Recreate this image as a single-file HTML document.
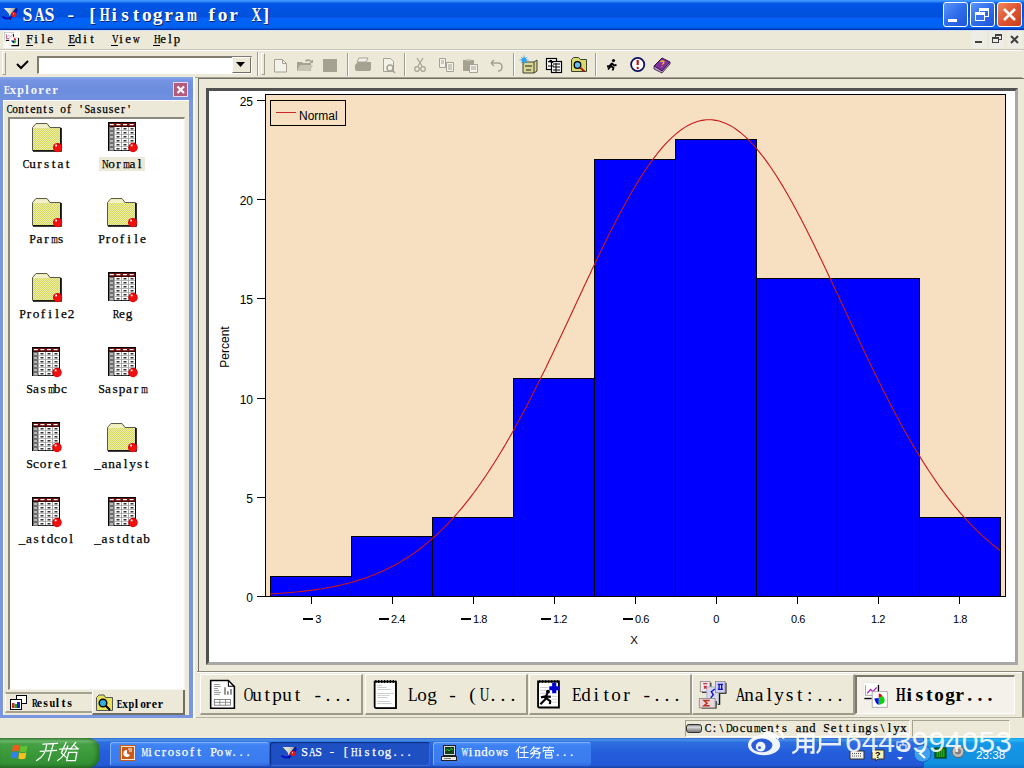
<!DOCTYPE html>
<html><head><meta charset="utf-8">
<style>
*{margin:0;padding:0;box-sizing:border-box}
html,body{width:1024px;height:768px;overflow:hidden;background:#ECE9D8;font-family:"Liberation Mono",monospace}
.a{position:absolute}
.mono{font-family:"Liberation Mono",monospace;white-space:pre}
.sans{font-family:"Liberation Sans",sans-serif;white-space:pre}
.tb{top:2px;width:25px;height:25px;border:1px solid #fff;border-radius:3px}
.mi{top:32px;font-size:12.5px;color:#000;white-space:pre;font-family:"Liberation Mono",monospace;transform:scaleX(0.933);transform-origin:0 0}
.lbl{font-size:11.7px;color:#000;white-space:pre;font-family:"Liberation Mono",monospace;text-align:center;width:80px}
.tab{top:674px;height:41px;width:163px;background:#ECE9D8;border-top:1px solid #fff;border-left:1px solid #fff;border-right:2px solid #9D9A8A;border-bottom:2px solid #9D9A8A}
.tabt{top:685px;font-size:16.6px;white-space:pre;font-family:"Liberation Mono",monospace;color:#000;transform:scaleY(1.16);transform-origin:0 0}
.tkb{top:742px;height:24px;border-radius:3px}
</style></head><body>

<div class="a" style="left:0;top:0;width:1024px;height:30px;background:linear-gradient(#3D95FF 0,#3D95FF 1px,#0A5CE8 3px,#0055E5 4px,#0052DC 17px,#0A5BF5 18px,#0063F8 20px,#0061F0 28px,#0035B0 29px,#0035B0 30px)"></div>
<div class="a" style="left:22px;top:4px;color:#fff;font-family:'Liberation Serif',serif;font-size:19.5px;font-weight:bold;white-space:pre;text-shadow:1px 1px 0 #0a246a"><span style="position:absolute;left:0.00px;width:10.85px;text-align:center;transform:scaleX(0.921)">S</span><span style="position:absolute;left:10.85px;width:10.85px;text-align:center;transform:scaleX(0.709)">A</span><span style="position:absolute;left:21.70px;width:10.85px;text-align:center;transform:scaleX(0.921)">S</span><span style="position:absolute;left:43.40px;width:10.85px;text-align:center">-</span><span style="position:absolute;left:65.10px;width:10.85px;text-align:center">[</span><span style="position:absolute;left:75.95px;width:10.85px;text-align:center;transform:scaleX(0.658)">H</span><span style="position:absolute;left:86.80px;width:10.85px;text-align:center">i</span><span style="position:absolute;left:97.65px;width:10.85px;text-align:center">s</span><span style="position:absolute;left:108.50px;width:10.85px;text-align:center">t</span><span style="position:absolute;left:119.35px;width:10.85px;text-align:center">o</span><span style="position:absolute;left:130.20px;width:10.85px;text-align:center">g</span><span style="position:absolute;left:141.05px;width:10.85px;text-align:center">r</span><span style="position:absolute;left:151.90px;width:10.85px;text-align:center">a</span><span style="position:absolute;left:162.75px;width:10.85px;text-align:center;transform:scaleX(0.615)">m</span><span style="position:absolute;left:184.45px;width:10.85px;text-align:center">f</span><span style="position:absolute;left:195.30px;width:10.85px;text-align:center">o</span><span style="position:absolute;left:206.15px;width:10.85px;text-align:center">r</span><span style="position:absolute;left:227.85px;width:10.85px;text-align:center;transform:scaleX(0.709)">X</span><span style="position:absolute;left:238.70px;width:10.85px;text-align:center">]</span></div>
<svg class="a" style="left:0;top:0" width="24" height="24" viewBox="0 0 24 24">
<defs><linearGradient id="fun" x1="0" x2="1"><stop offset="0" stop-color="#F0F0F0"/><stop offset="0.5" stop-color="#D8D8C8"/><stop offset="1" stop-color="#9090A0"/></linearGradient></defs>
<path d="M3.8 8 L16.3 8 L11 13.5 L9.6 16.5 L8.6 13.2 Z" fill="url(#fun)"/>
<path d="M16.5 8.2 L12 14 L13 16" fill="none" stroke="#101040" stroke-width="1.2"/>
<path d="M2.5 16.5 Q6 20 11 17.3 Q15.5 15 17 9" fill="none" stroke="#0810C8" stroke-width="2"/>
<circle cx="13.8" cy="14.4" r="2.6" fill="#E01818"/><rect x="13" y="13.3" width="1" height="1" fill="#fff"/>
<path d="M10 17.5 L10.5 20" stroke="#101040" stroke-width="1"/>
</svg>
<div class="a tb" style="left:943px;background:linear-gradient(135deg,#5D95FA,#2F6DEB 50%,#1F55D8)"><div class="a" style="left:4px;top:16px;width:9px;height:3px;background:#fff"></div></div>
<div class="a tb" style="left:970px;background:linear-gradient(135deg,#5D95FA,#2F6DEB 50%,#1F55D8)"><div class="a" style="left:8px;top:5px;width:10px;height:9px;border:1px solid #fff;border-top-width:3px"></div><div class="a" style="left:4px;top:9px;width:10px;height:9px;border:1px solid #fff;border-top-width:3px;background:#3A72E8"></div></div>
<div class="a tb" style="left:997px;background:linear-gradient(135deg,#F08A60,#DD5530 50%,#C83E1C)"><svg class="a" style="left:3px;top:3px" width="17" height="17"><path d="M3 3 L14 14 M14 3 L3 14" stroke="#fff" stroke-width="2.6"/></svg></div>
<div class="a" style="left:0;top:30px;width:1024px;height:1px;background:#D6E0F5"></div>
<svg class="a" style="left:0;top:30px" width="24" height="20" viewBox="0 0 922 768">
<rect x="130" y="40" width="640" height="660" fill="#FAFAF6"/>
<rect x="170" y="90" width="340" height="300" fill="#fff" stroke="#B8B0A8" stroke-width="22"/>
<path d="M245 330 L245 160 M245 330 L460 330" stroke="#A04060" stroke-width="30"/>
<path d="M270 280 L340 200 L400 250 L460 200" fill="none" stroke="#C03090" stroke-width="32" stroke-dasharray="30 20"/>
<path d="M515 160 L515 260" stroke="#000" stroke-width="40"/><path d="M230 400 L370 400" stroke="#000" stroke-width="40"/>
<rect x="360" y="290" width="340" height="290" fill="#fff" stroke="#D8D8D0" stroke-width="18"/>
<path d="M710 310 L710 600 L440 600" fill="none" stroke="#000" stroke-width="45"/>
<path d="M540 400 L540 300 Q610 320 620 390 Z" fill="#D01010"/>
<path d="M540 400 L630 400 Q620 500 540 520 Z" fill="#20B020"/>
<path d="M540 400 L540 520 Q460 480 420 400 Z" fill="#1010B0"/>
</svg>
<div class="a" style="left:25.50px;top:33.06px;color:#000;font-family:'Liberation Serif',serif;font-size:12.82px;line-height:12.82px;font-weight:normal;white-space:pre;-webkit-text-stroke:0.25px #000;"><span style="position:absolute;top:0;left:0.00px;width:7px;text-align:center;transform:scaleX(0.932)">F</span><span style="position:absolute;top:0;left:7.00px;width:7px;text-align:center">i</span><span style="position:absolute;top:0;left:14.00px;width:7px;text-align:center">l</span><span style="position:absolute;top:0;left:21.00px;width:7px;text-align:center">e</span></div>
<div class="a" style="left:26px;top:45px;width:7px;height:1px;background:#000"></div>
<div class="a" style="left:67.50px;top:33.06px;color:#000;font-family:'Liberation Serif',serif;font-size:12.82px;line-height:12.82px;font-weight:normal;white-space:pre;-webkit-text-stroke:0.25px #000;"><span style="position:absolute;top:0;left:0.00px;width:7px;text-align:center;transform:scaleX(0.849)">E</span><span style="position:absolute;top:0;left:7.00px;width:7px;text-align:center">d</span><span style="position:absolute;top:0;left:14.00px;width:7px;text-align:center">i</span><span style="position:absolute;top:0;left:21.00px;width:7px;text-align:center">t</span></div>
<div class="a" style="left:68px;top:45px;width:7px;height:1px;background:#000"></div>
<div class="a" style="left:110.50px;top:33.06px;color:#000;font-family:'Liberation Serif',serif;font-size:12.82px;line-height:12.82px;font-weight:normal;white-space:pre;-webkit-text-stroke:0.25px #000;"><span style="position:absolute;top:0;left:0.00px;width:7px;text-align:center;transform:scaleX(0.718)">V</span><span style="position:absolute;top:0;left:7.00px;width:7px;text-align:center">i</span><span style="position:absolute;top:0;left:14.00px;width:7px;text-align:center">e</span><span style="position:absolute;top:0;left:21.00px;width:7px;text-align:center;transform:scaleX(0.718)">w</span></div>
<div class="a" style="left:111px;top:45px;width:7px;height:1px;background:#000"></div>
<div class="a" style="left:152.50px;top:33.06px;color:#000;font-family:'Liberation Serif',serif;font-size:12.82px;line-height:12.82px;font-weight:normal;white-space:pre;-webkit-text-stroke:0.25px #000;"><span style="position:absolute;top:0;left:0.00px;width:7px;text-align:center;transform:scaleX(0.718)">H</span><span style="position:absolute;top:0;left:7.00px;width:7px;text-align:center">e</span><span style="position:absolute;top:0;left:14.00px;width:7px;text-align:center">l</span><span style="position:absolute;top:0;left:21.00px;width:7px;text-align:center">p</span></div>
<div class="a" style="left:153px;top:45px;width:7px;height:1px;background:#000"></div>
<div class="a" style="left:971px;top:31px;width:16px;height:17px;background:#EEEDE5"></div>
<div class="a" style="left:975px;top:41px;width:7px;height:2px;background:#404040"></div>
<div class="a" style="left:989px;top:31px;width:15px;height:17px;background:#EEEDE5"></div>
<div class="a" style="left:995px;top:34px;width:7px;height:6px;border:1px solid #404040;border-top-width:2px"></div><div class="a" style="left:992px;top:37px;width:7px;height:6px;border:1px solid #404040;border-top-width:2px;background:#EEEDE5"></div>
<div class="a" style="left:1007px;top:31px;width:15px;height:17px;background:#EEEDE5"></div>
<svg class="a" style="left:1010px;top:35px" width="10" height="9"><path d="M1 1 L8 8 M8 1 L1 8" stroke="#404040" stroke-width="2"/></svg>
<div class="a" style="left:0;top:49px;width:1024px;height:1px;background:#C9C6B6"></div>
<div class="a" style="left:0;top:50px;width:1022px;height:28px;background:#ECE9D8;border-top:1px solid #fff;border-bottom:1px solid #A5A291"></div>
<div class="a" style="left:2px;top:52px;width:4px;height:23px;border-left:1px solid #fff;border-top:1px solid #fff;border-right:1px solid #A09D8D;border-bottom:1px solid #A09D8D"></div>
<svg class="a" style="left:15px;top:58px" width="16" height="14"><path d="M2 6 L6 10 L13 3" fill="none" stroke="#000" stroke-width="2"/></svg>
<div class="a" style="left:37px;top:56px;width:215px;height:18px;background:#fff;border-left:2px solid #807D6E;border-top:2px solid #807D6E;border-right:1px solid #fff;border-bottom:1px solid #fff"></div>
<div class="a" style="left:232px;top:57px;width:19px;height:16px;background:#ECE9D8;border-left:1px solid #fff;border-top:1px solid #fff;border-right:1px solid #716F64;border-bottom:1px solid #716F64"></div>
<svg class="a" style="left:236px;top:62px" width="10" height="6"><path d="M0 0 L9 0 L4.5 5 Z" fill="#000"/></svg>
<div class="a" style="left:257px;top:52px;width:2px;height:24px;border-left:1px solid #A09D8D;border-right:1px solid #fff"></div>
<div class="a" style="left:261px;top:53px;width:4px;height:22px;border-left:1px solid #fff;border-top:1px solid #fff;border-right:1px solid #A09D8D;border-bottom:1px solid #A09D8D"></div>
<svg class="a" style="left:0;top:50px" width="700" height="28" viewBox="0 50 700 28">
<g fill="none" stroke="#A5A291" stroke-width="1">
<path d="M274.5 59.5 h8 l4 4 v8.5 h-12 Z" fill="#F3F2EA"/><path d="M282.5 59.5 v4 h4"/>
</g>
<path d="M297 62 h5 l1 1 h8 v8 h-14 Z" fill="#A5A291"/><path d="M300 65 h13 l-3 6 h-13 Z" fill="#C8C5B5"/><path d="M305 60 q4 -2 7 1 l1 -2 v4 h-4 l2 -1 q-3 -2 -5 0" fill="#A5A291"/>
<rect x="323" y="59" width="14" height="13" fill="#A5A291"/>
<path d="M355 65 l3 -3 h13 v7 q0 2 -2 2 h-12 q-2 0 -2 -2 Z" fill="#A5A291"/><path d="M359 58 h9 l-2 4 h-9 Z" fill="#F3F2EA" stroke="#A5A291"/>
<path d="M383.5 58.5 h7 l3 3 v10 h-10 Z" fill="#F3F2EA" stroke="#A5A291"/><circle cx="390" cy="68" r="3" fill="none" stroke="#A5A291" stroke-width="1.5"/><path d="M392 70 l3 3" stroke="#A5A291" stroke-width="1.5"/>
<path d="M417 58 l5 8 M423 58 l-5 8" stroke="#A5A291" stroke-width="1.2"/><circle cx="417" cy="69" r="2.3" fill="none" stroke="#A5A291" stroke-width="1.2"/><circle cx="423" cy="69" r="2.3" fill="none" stroke="#A5A291" stroke-width="1.2"/>
<path d="M439.5 58.5 h6 v9 h-6 Z M446.5 62.5 h7 v9 h-7 Z" fill="#F3F2EA" stroke="#A5A291"/><path d="M441 61 h3 M441 63 h3 M448 65 h4 M448 67 h4 M448 69 h4" stroke="#A5A291"/>
<path d="M463 60 h11 v11 h-11 Z" fill="#A5A291"/><path d="M466 59 h5 v2 h-5Z" fill="#C8C5B5"/><path d="M469.5 64.5 h8 v8 h-8 Z" fill="#F3F2EA" stroke="#A5A291"/><path d="M471 67 h5 M471 69 h5" stroke="#A5A291"/>
<path d="M491 63 l3 -3 M491 63 l3 3 M491 63 h7 q4 0 4 4 q0 4 -4 4" fill="none" stroke="#A5A291" stroke-width="1.5"/>
<path d="M513.5 53 v23" stroke="#A09D8D"/><path d="M514.5 53 v23" stroke="#fff"/>
<path d="M595.5 53 v23" stroke="#A09D8D"/><path d="M596.5 53 v23" stroke="#fff"/>
<path d="M347.5 53 v23" stroke="#A09D8D"/><path d="M348.5 53 v23" stroke="#fff"/>
<path d="M404.5 53 v23" stroke="#A09D8D"/><path d="M405.5 53 v23" stroke="#fff"/>
<!-- icon1 cabinet -->
<path d="M523 62 h11 l3 -2 v11 l-3 2 h-11 Z" fill="#D8D890" stroke="#404030" stroke-width="1"/><path d="M534 62 v11" stroke="#404030"/>
<path d="M525 66 h7 M526 70 h5" stroke="#202020" stroke-width="1.2"/>
<circle cx="524" cy="60" r="2.5" fill="#30A0F0"/><path d="M524 55.5 v9 M519.5 60 h9 M521 57 l6 6 M527 57 l-6 6" stroke="#30A0F0" stroke-width="0.8"/>
<!-- icon2 doc grid -->
<rect x="546.5" y="58.5" width="10" height="11" fill="#fff" stroke="#000" stroke-width="1.2"/><rect x="551.5" y="61.5" width="10" height="11" fill="#fff" stroke="#000" stroke-width="1.2"/>
<path d="M548 62 l3 -2 l2 3 M548 66 h6 M553 64 h7 M553 67 h7 M553 70 h7 M556 63 v9" stroke="#000" stroke-width="1"/>
<!-- icon3 folder magnifier -->
<path d="M571.5 59.5 l2 -2 h5 l2 2 h6 v12 h-15 Z" fill="#D8D870" stroke="#404030"/><circle cx="577.5" cy="65" r="3.3" fill="#60C0F0" stroke="#000" stroke-width="1.3"/><path d="M580 67.5 l4.5 4" stroke="#A02000" stroke-width="2"/>
<!-- running man -->
<circle cx="613.5" cy="60.5" r="1.6" fill="#000"/><path d="M612 63 l-2.5 3 l-2.5 0.5 M612 63 l2 2.5 l2.5 -0.5 M612 63 l-1 3 l2.5 2 l-1 2.5 M611 66 l-3 3.5" fill="none" stroke="#000" stroke-width="1.8"/>
<!-- exclamation -->
<circle cx="637.7" cy="64.5" r="6.6" fill="#fff" stroke="#101060" stroke-width="1.8"/><path d="M637.7 60 v5" stroke="#C01010" stroke-width="2.2"/><circle cx="637.7" cy="68" r="1.2" fill="#C01010"/>
<!-- purple book -->
<path d="M654 66 l8 -8 l8 4 l-8 9 Z" fill="#8030A0" stroke="#301040"/><path d="M654 66 v3 l8 4 l8 -9 v-2 l-8 9 Z" fill="#C0A0D0" stroke="#301040" stroke-width="0.8"/><path d="M660.5 62 q2 -2 3.5 0 q0 1.5 -2 2.5 M662 66 v0.5" stroke="#F0C020" stroke-width="1.3" fill="none"/>
</svg>
<div class="a" style="left:198px;top:78px;width:826px;height:593px;border-left:1px solid #716F64;border-top:1px solid #716F64"></div>
<div class="a" style="left:193px;top:77px;width:2px;height:641px;background:#F8F8F4"></div>
<div class="a" style="left:206px;top:88px;width:812px;height:577px;background:#fff;border-left:3px solid #505050;border-top:3px solid #505050;border-right:3px solid #A8A8A8;border-bottom:3px solid #A8A8A8"></div>
<svg class="a" style="left:0;top:0" width="1024" height="768" viewBox="0 0 1024 768" shape-rendering="crispEdges">
<rect x="265.5" y="94.5" width="740" height="502" fill="#F7E0C2" stroke="#000" stroke-width="1"/>
<rect x="270.5" y="576.5" width="81" height="20" fill="#0000FF" stroke="#000" stroke-width="1"/>
<rect x="351.5" y="536.5" width="81" height="60" fill="#0000FF" stroke="#000" stroke-width="1"/>
<rect x="432.5" y="517.5" width="81" height="79" fill="#0000FF" stroke="#000" stroke-width="1"/>
<rect x="513.5" y="378.5" width="81" height="218" fill="#0000FF" stroke="#000" stroke-width="1"/>
<rect x="594.5" y="159.5" width="81" height="437" fill="#0000FF" stroke="#000" stroke-width="1"/>
<rect x="675.5" y="139.5" width="81" height="457" fill="#0000FF" stroke="#000" stroke-width="1"/>
<rect x="756.5" y="278.5" width="81" height="318" fill="#0000FF" stroke="#000" stroke-width="1"/>
<rect x="837.5" y="278.5" width="82" height="318" fill="#0000FF" stroke="#000" stroke-width="1"/>
<rect x="919.5" y="517.5" width="81" height="79" fill="#0000FF" stroke="#000" stroke-width="1"/>
<line x1="257" y1="596.5" x2="1006" y2="596.5" stroke="#000" stroke-width="1"/>
<line x1="257" y1="596.5" x2="265" y2="596.5" stroke="#000" stroke-width="1"/>
<line x1="257" y1="497.5" x2="265" y2="497.5" stroke="#000" stroke-width="1"/>
<line x1="257" y1="398.5" x2="265" y2="398.5" stroke="#000" stroke-width="1"/>
<line x1="257" y1="298.5" x2="265" y2="298.5" stroke="#000" stroke-width="1"/>
<line x1="257" y1="199.5" x2="265" y2="199.5" stroke="#000" stroke-width="1"/>
<line x1="257" y1="100.5" x2="265" y2="100.5" stroke="#000" stroke-width="1"/>
<line x1="311.5" y1="597" x2="311.5" y2="604" stroke="#000" stroke-width="1"/>
<line x1="392.5" y1="597" x2="392.5" y2="604" stroke="#000" stroke-width="1"/>
<line x1="473.5" y1="597" x2="473.5" y2="604" stroke="#000" stroke-width="1"/>
<line x1="554.5" y1="597" x2="554.5" y2="604" stroke="#000" stroke-width="1"/>
<line x1="635.5" y1="597" x2="635.5" y2="604" stroke="#000" stroke-width="1"/>
<line x1="716.5" y1="597" x2="716.5" y2="604" stroke="#000" stroke-width="1"/>
<line x1="797.5" y1="597" x2="797.5" y2="604" stroke="#000" stroke-width="1"/>
<line x1="878.5" y1="597" x2="878.5" y2="604" stroke="#000" stroke-width="1"/>
<line x1="959.5" y1="597" x2="959.5" y2="604" stroke="#000" stroke-width="1"/>
<rect x="270.5" y="100.5" width="75" height="25" fill="#F7E0C2" stroke="#000" stroke-width="1"/>
<line x1="276" y1="112.5" x2="296" y2="112.5" stroke="#C82828" stroke-width="1"/>
</svg>
<svg class="a" style="left:0;top:0" width="1024" height="768" viewBox="0 0 1024 768"><polyline points="270,594.0 272,593.8 274,593.7 276,593.6 278,593.5 280,593.3 282,593.2 284,593.0 286,592.9 288,592.7 290,592.6 292,592.4 294,592.2 296,592.0 298,591.8 300,591.6 302,591.4 304,591.1 306,590.9 308,590.7 310,590.4 312,590.1 314,589.9 316,589.6 318,589.3 320,589.0 322,588.7 324,588.3 326,588.0 328,587.6 330,587.3 332,586.9 334,586.5 336,586.1 338,585.6 340,585.2 342,584.7 344,584.2 346,583.7 348,583.2 350,582.7 352,582.2 354,581.6 356,581.0 358,580.4 360,579.8 362,579.1 364,578.5 366,577.8 368,577.0 370,576.3 372,575.6 374,574.8 376,574.0 378,573.1 380,572.3 382,571.4 384,570.5 386,569.5 388,568.6 390,567.6 392,566.5 394,565.5 396,564.4 398,563.3 400,562.1 402,560.9 404,559.7 406,558.5 408,557.2 410,555.9 412,554.5 414,553.1 416,551.7 418,550.3 420,548.8 422,547.2 424,545.6 426,544.0 428,542.4 430,540.7 432,538.9 434,537.2 436,535.4 438,533.5 440,531.6 442,529.7 444,527.7 446,525.6 448,523.6 450,521.5 452,519.3 454,517.1 456,514.8 458,512.5 460,510.2 462,507.8 464,505.4 466,502.9 468,500.3 470,497.8 472,495.2 474,492.5 476,489.8 478,487.0 480,484.2 482,481.3 484,478.4 486,475.5 488,472.5 490,469.4 492,466.3 494,463.2 496,460.0 498,456.8 500,453.5 502,450.2 504,446.9 506,443.4 508,440.0 510,436.5 512,433.0 514,429.4 516,425.8 518,422.1 520,418.5 522,414.7 524,411.0 526,407.2 528,403.3 530,399.4 532,395.5 534,391.6 536,387.6 538,383.6 540,379.6 542,375.5 544,371.5 546,367.4 548,363.2 550,359.1 552,354.9 554,350.7 556,346.5 558,342.3 560,338.0 562,333.8 564,329.5 566,325.2 568,320.9 570,316.7 572,312.4 574,308.1 576,303.8 578,299.5 580,295.2 582,290.9 584,286.6 586,282.4 588,278.1 590,273.9 592,269.6 594,265.4 596,261.2 598,257.1 600,252.9 602,248.8 604,244.7 606,240.7 608,236.6 610,232.6 612,228.7 614,224.8 616,220.9 618,217.1 620,213.3 622,209.5 624,205.9 626,202.2 628,198.6 630,195.1 632,191.6 634,188.2 636,184.9 638,181.6 640,178.4 642,175.2 644,172.2 646,169.1 648,166.2 650,163.4 652,160.6 654,157.9 656,155.3 658,152.7 660,150.3 662,147.9 664,145.6 666,143.4 668,141.3 670,139.3 672,137.4 674,135.6 676,133.8 678,132.2 680,130.6 682,129.2 684,127.9 686,126.6 688,125.5 690,124.4 692,123.5 694,122.7 696,121.9 698,121.3 700,120.8 702,120.4 704,120.1 706,119.8 708,119.7 710,119.7 712,119.8 714,120.1 716,120.4 718,120.8 720,121.3 722,122.0 724,122.7 726,123.5 728,124.5 730,125.5 732,126.6 734,127.9 736,129.2 738,130.7 740,132.2 742,133.9 744,135.6 746,137.4 748,139.3 750,141.4 752,143.5 754,145.7 756,147.9 758,150.3 760,152.8 762,155.3 764,157.9 766,160.6 768,163.4 770,166.3 772,169.2 774,172.2 776,175.3 778,178.4 780,181.7 782,184.9 784,188.3 786,191.7 788,195.2 790,198.7 792,202.3 794,205.9 796,209.6 798,213.4 800,217.1 802,221.0 804,224.8 806,228.8 808,232.7 810,236.7 812,240.7 814,244.8 816,248.9 818,253.0 820,257.2 822,261.3 824,265.5 826,269.7 828,274.0 830,278.2 832,282.4 834,286.7 836,291.0 838,295.3 840,299.6 842,303.9 844,308.2 846,312.5 848,316.7 850,321.0 852,325.3 854,329.6 856,333.9 858,338.1 860,342.4 862,346.6 864,350.8 866,355.0 868,359.2 870,363.3 872,367.4 874,371.5 876,375.6 878,379.7 880,383.7 882,387.7 884,391.7 886,395.6 888,399.5 890,403.4 892,407.2 894,411.0 896,414.8 898,418.5 900,422.2 902,425.9 904,429.5 906,433.1 908,436.6 910,440.1 912,443.5 914,446.9 916,450.3 918,453.6 920,456.9 922,460.1 924,463.3 926,466.4 928,469.5 930,472.5 932,475.5 934,478.5 936,481.4 938,484.2 940,487.1 942,489.8 944,492.5 946,495.2 948,497.8 950,500.4 952,502.9 954,505.4 956,507.8 958,510.2 960,512.6 962,514.9 964,517.1 966,519.3 968,521.5 970,523.6 972,525.7 974,527.7 976,529.7 978,531.6 980,533.5 982,535.4 984,537.2 986,539.0 988,540.7 990,542.4 992,544.1 994,545.7 996,547.2 998,548.8 1000,550.3" fill="none" stroke="#C81818" stroke-width="1.1"/></svg>
<div class="a sans" style="left:299px;top:109px;font-size:12px;color:#000">Normal</div>
<div class="a sans" style="right:771px;top:591px;font-size:12px;color:#000;text-align:right">0</div>
<div class="a sans" style="right:771px;top:492px;font-size:12px;color:#000;text-align:right">5</div>
<div class="a sans" style="right:771px;top:393px;font-size:12px;color:#000;text-align:right">10</div>
<div class="a sans" style="right:771px;top:293px;font-size:12px;color:#000;text-align:right">15</div>
<div class="a sans" style="right:771px;top:194px;font-size:12px;color:#000;text-align:right">20</div>
<div class="a sans" style="right:771px;top:95px;font-size:12px;color:#000;text-align:right">25</div>
<div class="a sans" style="left:272px;width:80px;text-align:center;top:613px;font-size:11px;letter-spacing:-0.4px;color:#000"><span style="display:inline-block;width:10px;height:2px;background:#000;vertical-align:3px;margin-right:2px"></span>3</div>
<div class="a sans" style="left:352px;width:80px;text-align:center;top:613px;font-size:11px;letter-spacing:-0.4px;color:#000"><span style="display:inline-block;width:10px;height:2px;background:#000;vertical-align:3px;margin-right:2px"></span>2.4</div>
<div class="a sans" style="left:434px;width:80px;text-align:center;top:613px;font-size:11px;letter-spacing:-0.4px;color:#000"><span style="display:inline-block;width:10px;height:2px;background:#000;vertical-align:3px;margin-right:2px"></span>1.8</div>
<div class="a sans" style="left:514px;width:80px;text-align:center;top:613px;font-size:11px;letter-spacing:-0.4px;color:#000"><span style="display:inline-block;width:10px;height:2px;background:#000;vertical-align:3px;margin-right:2px"></span>1.2</div>
<div class="a sans" style="left:596px;width:80px;text-align:center;top:613px;font-size:11px;letter-spacing:-0.4px;color:#000"><span style="display:inline-block;width:10px;height:2px;background:#000;vertical-align:3px;margin-right:2px"></span>0.6</div>
<div class="a sans" style="left:676px;width:80px;text-align:center;top:613px;font-size:11px;letter-spacing:-0.4px;color:#000">0</div>
<div class="a sans" style="left:758px;width:80px;text-align:center;top:613px;font-size:11px;letter-spacing:-0.4px;color:#000">0.6</div>
<div class="a sans" style="left:838px;width:80px;text-align:center;top:613px;font-size:11px;letter-spacing:-0.4px;color:#000">1.2</div>
<div class="a sans" style="left:920px;width:80px;text-align:center;top:613px;font-size:11px;letter-spacing:-0.4px;color:#000">1.8</div>
<div class="a sans" style="left:624px;width:20px;text-align:center;top:634px;font-size:11.5px;color:#000">X</div>
<div class="a sans" style="left:195px;top:340px;width:60px;text-align:center;font-size:12px;color:#000;transform:rotate(-90deg)">Percent</div>
<div class="a" style="left:0;top:77px;width:193px;height:641px;background:#7A96E0"></div>
<div class="a" style="left:0;top:77px;width:193px;height:23px;background:linear-gradient(#8CAAEC 0,#7594E2 3px,#6C8CDD 60%,#7191E0 100%)"></div>
<div class="a" style="left:2.50px;top:83.69px;color:#F4F6FF;font-family:'Liberation Serif',serif;font-size:12.67px;line-height:12.67px;font-weight:bold;white-space:pre;"><span style="position:absolute;top:0;left:0.00px;width:7px;text-align:center;transform:scaleX(0.787)">E</span><span style="position:absolute;top:0;left:7.00px;width:7px;text-align:center">x</span><span style="position:absolute;top:0;left:14.00px;width:7px;text-align:center;transform:scaleX(0.944)">p</span><span style="position:absolute;top:0;left:21.00px;width:7px;text-align:center">l</span><span style="position:absolute;top:0;left:28.00px;width:7px;text-align:center">o</span><span style="position:absolute;top:0;left:35.00px;width:7px;text-align:center">r</span><span style="position:absolute;top:0;left:42.00px;width:7px;text-align:center">e</span><span style="position:absolute;top:0;left:49.00px;width:7px;text-align:center">r</span></div>
<div class="a" style="left:173px;top:82px;width:15px;height:15px;background:#B45A7C;border:1px solid #E8D8F0"></div>
<svg class="a" style="left:176px;top:85px" width="10" height="10"><path d="M1.5 1.5 L8 8 M8 1.5 L1.5 8" stroke="#fff" stroke-width="2.2"/></svg>
<div class="a" style="left:3px;top:100px;width:186px;height:615px;background:#ECE9D8;border-left:1px solid #fff;border-top:1px solid #fff"></div>
<div class="a" style="left:6.00px;top:103.83px;color:#000;font-family:'Liberation Serif',serif;font-size:11.91px;line-height:11.91px;font-weight:normal;white-space:pre;-webkit-text-stroke:0.25px #000;"><span style="position:absolute;top:0;left:0.00px;width:6px;text-align:center;transform:scaleX(0.718)">C</span><span style="position:absolute;top:0;left:6.00px;width:6px;text-align:center;transform:scaleX(0.957)">o</span><span style="position:absolute;top:0;left:12.00px;width:6px;text-align:center;transform:scaleX(0.957)">n</span><span style="position:absolute;top:0;left:18.00px;width:6px;text-align:center">t</span><span style="position:absolute;top:0;left:24.00px;width:6px;text-align:center">e</span><span style="position:absolute;top:0;left:30.00px;width:6px;text-align:center;transform:scaleX(0.957)">n</span><span style="position:absolute;top:0;left:36.00px;width:6px;text-align:center">t</span><span style="position:absolute;top:0;left:42.00px;width:6px;text-align:center">s</span><span style="position:absolute;top:0;left:54.00px;width:6px;text-align:center;transform:scaleX(0.957)">o</span><span style="position:absolute;top:0;left:60.00px;width:6px;text-align:center">f</span><span style="position:absolute;top:0;left:72.00px;width:6px;text-align:center">'</span><span style="position:absolute;top:0;left:78.00px;width:6px;text-align:center;transform:scaleX(0.861)">S</span><span style="position:absolute;top:0;left:84.00px;width:6px;text-align:center">a</span><span style="position:absolute;top:0;left:90.00px;width:6px;text-align:center">s</span><span style="position:absolute;top:0;left:96.00px;width:6px;text-align:center;transform:scaleX(0.957)">u</span><span style="position:absolute;top:0;left:102.00px;width:6px;text-align:center">s</span><span style="position:absolute;top:0;left:108.00px;width:6px;text-align:center">e</span><span style="position:absolute;top:0;left:114.00px;width:6px;text-align:center">r</span><span style="position:absolute;top:0;left:120.00px;width:6px;text-align:center">'</span></div>
<div class="a" style="left:8px;top:117px;width:177px;height:573px;background:#fff;border-left:2px solid #8C8A7C;border-top:2px solid #8C8A7C;border-right:1px solid #F5F4EE;border-bottom:1px solid #F5F4EE"></div>
<svg class="a" style="left:32px;top:122px" width="34" height="34" viewBox="0 0 34 34">
<defs><pattern id="dith32122" width="2" height="2" patternUnits="userSpaceOnUse"><rect width="2" height="2" fill="#D4D860"/><rect width="1" height="1" fill="#EEEEA8"/><rect x="1" y="1" width="1" height="1" fill="#EEEEA8"/></pattern></defs>
<path d="M0.5 5.5 L4 1.5 L15 1.5 L18 5.5 L28.5 5.5 L28.5 28.5 L0.5 28.5 Z" fill="url(#dith32122)" stroke="#5a5a48" stroke-width="1"/>
<path d="M1 6 L4.2 2.2 L14.7 2.2 L17 6 Z" fill="#F2F0C8"/>
<path d="M29 6 L29 29 L1 29" fill="none" stroke="#000" stroke-width="1.6"/>
<circle cx="25.6" cy="25.6" r="4.6" fill="#E00000"/><circle cx="26" cy="26.2" r="3.6" fill="#F01010"/><rect x="23.2" y="22.6" width="1.8" height="1.8" fill="#fff"/>
</svg>
<div class="a" style="left:22.00px;top:156.58px;color:#000;font-family:'Liberation Serif',serif;font-size:13.28px;line-height:13.28px;font-weight:normal;white-space:pre;-webkit-text-stroke:0.25px #000;"><span style="position:absolute;top:0;left:0.00px;width:7px;text-align:center;transform:scaleX(0.751)">C</span><span style="position:absolute;top:0;left:7.00px;width:7px;text-align:center">u</span><span style="position:absolute;top:0;left:14.00px;width:7px;text-align:center">r</span><span style="position:absolute;top:0;left:21.00px;width:7px;text-align:center">s</span><span style="position:absolute;top:0;left:28.00px;width:7px;text-align:center">t</span><span style="position:absolute;top:0;left:35.00px;width:7px;text-align:center">a</span><span style="position:absolute;top:0;left:42.00px;width:7px;text-align:center">t</span></div>
<svg class="a" style="left:108px;top:122px" width="34" height="34" viewBox="0 0 34 34">
<rect x="0" y="0" width="28" height="29" fill="#000"/>
<rect x="1" y="1" width="26" height="3.6" fill="#701010"/><rect x="1.8" y="2" width="4" height="1.2" fill="#fff"/><rect x="8.4" y="2" width="4" height="1.2" fill="#fff"/><rect x="15.0" y="2" width="4" height="1.2" fill="#fff"/><rect x="21.6" y="2" width="4" height="1.2" fill="#fff"/>
<rect x="1" y="5" width="26" height="23" fill="#a8a8a8"/><rect x="1" y="5" width="5" height="4" fill="#6e6e6e"/><rect x="2" y="6.5" width="3" height="1" fill="#fff"/><rect x="7" y="5" width="6" height="3.2" fill="#fff"/><rect x="8.5" y="6.2" width="3" height="1.2" fill="#000"/><rect x="14" y="5" width="6" height="3.2" fill="#fff"/><rect x="15.5" y="6.2" width="3" height="1.2" fill="#000"/><rect x="21" y="5" width="6" height="3.2" fill="#fff"/><rect x="22.5" y="6.2" width="3" height="1.2" fill="#000"/><rect x="1" y="9" width="5" height="4" fill="#6e6e6e"/><rect x="2" y="10.5" width="3" height="1" fill="#fff"/><rect x="7" y="9" width="6" height="3.2" fill="#fff"/><rect x="8.5" y="10.2" width="3" height="1.2" fill="#000"/><rect x="14" y="9" width="6" height="3.2" fill="#fff"/><rect x="15.5" y="10.2" width="3" height="1.2" fill="#000"/><rect x="21" y="9" width="6" height="3.2" fill="#fff"/><rect x="22.5" y="10.2" width="3" height="1.2" fill="#000"/><rect x="1" y="13" width="5" height="4" fill="#6e6e6e"/><rect x="2" y="14.5" width="3" height="1" fill="#fff"/><rect x="7" y="13" width="6" height="3.2" fill="#fff"/><rect x="8.5" y="14.2" width="3" height="1.2" fill="#000"/><rect x="14" y="13" width="6" height="3.2" fill="#fff"/><rect x="15.5" y="14.2" width="3" height="1.2" fill="#000"/><rect x="21" y="13" width="6" height="3.2" fill="#fff"/><rect x="22.5" y="14.2" width="3" height="1.2" fill="#000"/><rect x="1" y="17" width="5" height="4" fill="#6e6e6e"/><rect x="2" y="18.5" width="3" height="1" fill="#fff"/><rect x="7" y="17" width="6" height="3.2" fill="#fff"/><rect x="8.5" y="18.2" width="3" height="1.2" fill="#000"/><rect x="14" y="17" width="6" height="3.2" fill="#fff"/><rect x="15.5" y="18.2" width="3" height="1.2" fill="#000"/><rect x="21" y="17" width="6" height="3.2" fill="#fff"/><rect x="22.5" y="18.2" width="3" height="1.2" fill="#000"/><rect x="1" y="21" width="5" height="4" fill="#6e6e6e"/><rect x="2" y="22.5" width="3" height="1" fill="#fff"/><rect x="7" y="21" width="6" height="3.2" fill="#fff"/><rect x="8.5" y="22.2" width="3" height="1.2" fill="#000"/><rect x="14" y="21" width="6" height="3.2" fill="#fff"/><rect x="15.5" y="22.2" width="3" height="1.2" fill="#000"/><rect x="21" y="21" width="6" height="3.2" fill="#fff"/><rect x="22.5" y="22.2" width="3" height="1.2" fill="#000"/><rect x="1" y="25" width="5" height="4" fill="#6e6e6e"/><rect x="2" y="26.5" width="3" height="1" fill="#fff"/><rect x="7" y="25" width="6" height="3.2" fill="#fff"/><rect x="8.5" y="26.2" width="3" height="1.2" fill="#000"/><rect x="14" y="25" width="6" height="3.2" fill="#fff"/><rect x="15.5" y="26.2" width="3" height="1.2" fill="#000"/><rect x="21" y="25" width="6" height="3.2" fill="#fff"/><rect x="22.5" y="26.2" width="3" height="1.2" fill="#000"/>
<circle cx="25" cy="25.5" r="4.7" fill="#E00000"/><circle cx="25.3" cy="26" r="3.6" fill="#F01010"/><rect x="22.7" y="22.5" width="1.8" height="1.8" fill="#fff"/>
</svg>
<div class="a" style="left:99px;top:157px;width:46px;height:14px;background:#ECE9D8"></div>
<div class="a" style="left:101.00px;top:156.58px;color:#000;font-family:'Liberation Serif',serif;font-size:13.28px;line-height:13.28px;font-weight:normal;white-space:pre;-webkit-text-stroke:0.25px #000;"><span style="position:absolute;top:0;left:0.00px;width:7px;text-align:center;transform:scaleX(0.693)">N</span><span style="position:absolute;top:0;left:7.00px;width:7px;text-align:center">o</span><span style="position:absolute;top:0;left:14.00px;width:7px;text-align:center">r</span><span style="position:absolute;top:0;left:21.00px;width:7px;text-align:center;transform:scaleX(0.644)">m</span><span style="position:absolute;top:0;left:28.00px;width:7px;text-align:center">a</span><span style="position:absolute;top:0;left:35.00px;width:7px;text-align:center">l</span></div>
<svg class="a" style="left:32px;top:197px" width="34" height="34" viewBox="0 0 34 34">
<defs><pattern id="dith32197" width="2" height="2" patternUnits="userSpaceOnUse"><rect width="2" height="2" fill="#D4D860"/><rect width="1" height="1" fill="#EEEEA8"/><rect x="1" y="1" width="1" height="1" fill="#EEEEA8"/></pattern></defs>
<path d="M0.5 5.5 L4 1.5 L15 1.5 L18 5.5 L28.5 5.5 L28.5 28.5 L0.5 28.5 Z" fill="url(#dith32197)" stroke="#5a5a48" stroke-width="1"/>
<path d="M1 6 L4.2 2.2 L14.7 2.2 L17 6 Z" fill="#F2F0C8"/>
<path d="M29 6 L29 29 L1 29" fill="none" stroke="#000" stroke-width="1.6"/>
<circle cx="25.6" cy="25.6" r="4.6" fill="#E00000"/><circle cx="26" cy="26.2" r="3.6" fill="#F01010"/><rect x="23.2" y="22.6" width="1.8" height="1.8" fill="#fff"/>
</svg>
<div class="a" style="left:29.00px;top:231.58px;color:#000;font-family:'Liberation Serif',serif;font-size:13.28px;line-height:13.28px;font-weight:normal;white-space:pre;-webkit-text-stroke:0.25px #000;"><span style="position:absolute;top:0;left:0.00px;width:7px;text-align:center;transform:scaleX(0.900)">P</span><span style="position:absolute;top:0;left:7.00px;width:7px;text-align:center">a</span><span style="position:absolute;top:0;left:14.00px;width:7px;text-align:center">r</span><span style="position:absolute;top:0;left:21.00px;width:7px;text-align:center;transform:scaleX(0.644)">m</span><span style="position:absolute;top:0;left:28.00px;width:7px;text-align:center">s</span></div>
<svg class="a" style="left:107px;top:197px" width="34" height="34" viewBox="0 0 34 34">
<defs><pattern id="dith107197" width="2" height="2" patternUnits="userSpaceOnUse"><rect width="2" height="2" fill="#D4D860"/><rect width="1" height="1" fill="#EEEEA8"/><rect x="1" y="1" width="1" height="1" fill="#EEEEA8"/></pattern></defs>
<path d="M0.5 5.5 L4 1.5 L15 1.5 L18 5.5 L28.5 5.5 L28.5 28.5 L0.5 28.5 Z" fill="url(#dith107197)" stroke="#5a5a48" stroke-width="1"/>
<path d="M1 6 L4.2 2.2 L14.7 2.2 L17 6 Z" fill="#F2F0C8"/>
<path d="M29 6 L29 29 L1 29" fill="none" stroke="#000" stroke-width="1.6"/>
<circle cx="25.6" cy="25.6" r="4.6" fill="#E00000"/><circle cx="26" cy="26.2" r="3.6" fill="#F01010"/><rect x="23.2" y="22.6" width="1.8" height="1.8" fill="#fff"/>
</svg>
<div class="a" style="left:97.50px;top:231.58px;color:#000;font-family:'Liberation Serif',serif;font-size:13.28px;line-height:13.28px;font-weight:normal;white-space:pre;-webkit-text-stroke:0.25px #000;"><span style="position:absolute;top:0;left:0.00px;width:7px;text-align:center;transform:scaleX(0.900)">P</span><span style="position:absolute;top:0;left:7.00px;width:7px;text-align:center">r</span><span style="position:absolute;top:0;left:14.00px;width:7px;text-align:center">o</span><span style="position:absolute;top:0;left:21.00px;width:7px;text-align:center">f</span><span style="position:absolute;top:0;left:28.00px;width:7px;text-align:center">i</span><span style="position:absolute;top:0;left:35.00px;width:7px;text-align:center">l</span><span style="position:absolute;top:0;left:42.00px;width:7px;text-align:center">e</span></div>
<svg class="a" style="left:32px;top:272px" width="34" height="34" viewBox="0 0 34 34">
<defs><pattern id="dith32272" width="2" height="2" patternUnits="userSpaceOnUse"><rect width="2" height="2" fill="#D4D860"/><rect width="1" height="1" fill="#EEEEA8"/><rect x="1" y="1" width="1" height="1" fill="#EEEEA8"/></pattern></defs>
<path d="M0.5 5.5 L4 1.5 L15 1.5 L18 5.5 L28.5 5.5 L28.5 28.5 L0.5 28.5 Z" fill="url(#dith32272)" stroke="#5a5a48" stroke-width="1"/>
<path d="M1 6 L4.2 2.2 L14.7 2.2 L17 6 Z" fill="#F2F0C8"/>
<path d="M29 6 L29 29 L1 29" fill="none" stroke="#000" stroke-width="1.6"/>
<circle cx="25.6" cy="25.6" r="4.6" fill="#E00000"/><circle cx="26" cy="26.2" r="3.6" fill="#F01010"/><rect x="23.2" y="22.6" width="1.8" height="1.8" fill="#fff"/>
</svg>
<div class="a" style="left:18.50px;top:306.58px;color:#000;font-family:'Liberation Serif',serif;font-size:13.28px;line-height:13.28px;font-weight:normal;white-space:pre;-webkit-text-stroke:0.25px #000;"><span style="position:absolute;top:0;left:0.00px;width:7px;text-align:center;transform:scaleX(0.900)">P</span><span style="position:absolute;top:0;left:7.00px;width:7px;text-align:center">r</span><span style="position:absolute;top:0;left:14.00px;width:7px;text-align:center">o</span><span style="position:absolute;top:0;left:21.00px;width:7px;text-align:center">f</span><span style="position:absolute;top:0;left:28.00px;width:7px;text-align:center">i</span><span style="position:absolute;top:0;left:35.00px;width:7px;text-align:center">l</span><span style="position:absolute;top:0;left:42.00px;width:7px;text-align:center">e</span><span style="position:absolute;top:0;left:49.00px;width:7px;text-align:center">2</span></div>
<svg class="a" style="left:108px;top:272px" width="34" height="34" viewBox="0 0 34 34">
<rect x="0" y="0" width="28" height="29" fill="#000"/>
<rect x="1" y="1" width="26" height="3.6" fill="#701010"/><rect x="1.8" y="2" width="4" height="1.2" fill="#fff"/><rect x="8.4" y="2" width="4" height="1.2" fill="#fff"/><rect x="15.0" y="2" width="4" height="1.2" fill="#fff"/><rect x="21.6" y="2" width="4" height="1.2" fill="#fff"/>
<rect x="1" y="5" width="26" height="23" fill="#a8a8a8"/><rect x="1" y="5" width="5" height="4" fill="#6e6e6e"/><rect x="2" y="6.5" width="3" height="1" fill="#fff"/><rect x="7" y="5" width="6" height="3.2" fill="#fff"/><rect x="8.5" y="6.2" width="3" height="1.2" fill="#000"/><rect x="14" y="5" width="6" height="3.2" fill="#fff"/><rect x="15.5" y="6.2" width="3" height="1.2" fill="#000"/><rect x="21" y="5" width="6" height="3.2" fill="#fff"/><rect x="22.5" y="6.2" width="3" height="1.2" fill="#000"/><rect x="1" y="9" width="5" height="4" fill="#6e6e6e"/><rect x="2" y="10.5" width="3" height="1" fill="#fff"/><rect x="7" y="9" width="6" height="3.2" fill="#fff"/><rect x="8.5" y="10.2" width="3" height="1.2" fill="#000"/><rect x="14" y="9" width="6" height="3.2" fill="#fff"/><rect x="15.5" y="10.2" width="3" height="1.2" fill="#000"/><rect x="21" y="9" width="6" height="3.2" fill="#fff"/><rect x="22.5" y="10.2" width="3" height="1.2" fill="#000"/><rect x="1" y="13" width="5" height="4" fill="#6e6e6e"/><rect x="2" y="14.5" width="3" height="1" fill="#fff"/><rect x="7" y="13" width="6" height="3.2" fill="#fff"/><rect x="8.5" y="14.2" width="3" height="1.2" fill="#000"/><rect x="14" y="13" width="6" height="3.2" fill="#fff"/><rect x="15.5" y="14.2" width="3" height="1.2" fill="#000"/><rect x="21" y="13" width="6" height="3.2" fill="#fff"/><rect x="22.5" y="14.2" width="3" height="1.2" fill="#000"/><rect x="1" y="17" width="5" height="4" fill="#6e6e6e"/><rect x="2" y="18.5" width="3" height="1" fill="#fff"/><rect x="7" y="17" width="6" height="3.2" fill="#fff"/><rect x="8.5" y="18.2" width="3" height="1.2" fill="#000"/><rect x="14" y="17" width="6" height="3.2" fill="#fff"/><rect x="15.5" y="18.2" width="3" height="1.2" fill="#000"/><rect x="21" y="17" width="6" height="3.2" fill="#fff"/><rect x="22.5" y="18.2" width="3" height="1.2" fill="#000"/><rect x="1" y="21" width="5" height="4" fill="#6e6e6e"/><rect x="2" y="22.5" width="3" height="1" fill="#fff"/><rect x="7" y="21" width="6" height="3.2" fill="#fff"/><rect x="8.5" y="22.2" width="3" height="1.2" fill="#000"/><rect x="14" y="21" width="6" height="3.2" fill="#fff"/><rect x="15.5" y="22.2" width="3" height="1.2" fill="#000"/><rect x="21" y="21" width="6" height="3.2" fill="#fff"/><rect x="22.5" y="22.2" width="3" height="1.2" fill="#000"/><rect x="1" y="25" width="5" height="4" fill="#6e6e6e"/><rect x="2" y="26.5" width="3" height="1" fill="#fff"/><rect x="7" y="25" width="6" height="3.2" fill="#fff"/><rect x="8.5" y="26.2" width="3" height="1.2" fill="#000"/><rect x="14" y="25" width="6" height="3.2" fill="#fff"/><rect x="15.5" y="26.2" width="3" height="1.2" fill="#000"/><rect x="21" y="25" width="6" height="3.2" fill="#fff"/><rect x="22.5" y="26.2" width="3" height="1.2" fill="#000"/>
<circle cx="25" cy="25.5" r="4.7" fill="#E00000"/><circle cx="25.3" cy="26" r="3.6" fill="#F01010"/><rect x="22.7" y="22.5" width="1.8" height="1.8" fill="#fff"/>
</svg>
<div class="a" style="left:111.50px;top:306.58px;color:#000;font-family:'Liberation Serif',serif;font-size:13.28px;line-height:13.28px;font-weight:normal;white-space:pre;-webkit-text-stroke:0.25px #000;"><span style="position:absolute;top:0;left:0.00px;width:7px;text-align:center;transform:scaleX(0.751)">R</span><span style="position:absolute;top:0;left:7.00px;width:7px;text-align:center">e</span><span style="position:absolute;top:0;left:14.00px;width:7px;text-align:center">g</span></div>
<svg class="a" style="left:32px;top:347px" width="34" height="34" viewBox="0 0 34 34">
<rect x="0" y="0" width="28" height="29" fill="#000"/>
<rect x="1" y="1" width="26" height="3.6" fill="#701010"/><rect x="1.8" y="2" width="4" height="1.2" fill="#fff"/><rect x="8.4" y="2" width="4" height="1.2" fill="#fff"/><rect x="15.0" y="2" width="4" height="1.2" fill="#fff"/><rect x="21.6" y="2" width="4" height="1.2" fill="#fff"/>
<rect x="1" y="5" width="26" height="23" fill="#a8a8a8"/><rect x="1" y="5" width="5" height="4" fill="#6e6e6e"/><rect x="2" y="6.5" width="3" height="1" fill="#fff"/><rect x="7" y="5" width="6" height="3.2" fill="#fff"/><rect x="8.5" y="6.2" width="3" height="1.2" fill="#000"/><rect x="14" y="5" width="6" height="3.2" fill="#fff"/><rect x="15.5" y="6.2" width="3" height="1.2" fill="#000"/><rect x="21" y="5" width="6" height="3.2" fill="#fff"/><rect x="22.5" y="6.2" width="3" height="1.2" fill="#000"/><rect x="1" y="9" width="5" height="4" fill="#6e6e6e"/><rect x="2" y="10.5" width="3" height="1" fill="#fff"/><rect x="7" y="9" width="6" height="3.2" fill="#fff"/><rect x="8.5" y="10.2" width="3" height="1.2" fill="#000"/><rect x="14" y="9" width="6" height="3.2" fill="#fff"/><rect x="15.5" y="10.2" width="3" height="1.2" fill="#000"/><rect x="21" y="9" width="6" height="3.2" fill="#fff"/><rect x="22.5" y="10.2" width="3" height="1.2" fill="#000"/><rect x="1" y="13" width="5" height="4" fill="#6e6e6e"/><rect x="2" y="14.5" width="3" height="1" fill="#fff"/><rect x="7" y="13" width="6" height="3.2" fill="#fff"/><rect x="8.5" y="14.2" width="3" height="1.2" fill="#000"/><rect x="14" y="13" width="6" height="3.2" fill="#fff"/><rect x="15.5" y="14.2" width="3" height="1.2" fill="#000"/><rect x="21" y="13" width="6" height="3.2" fill="#fff"/><rect x="22.5" y="14.2" width="3" height="1.2" fill="#000"/><rect x="1" y="17" width="5" height="4" fill="#6e6e6e"/><rect x="2" y="18.5" width="3" height="1" fill="#fff"/><rect x="7" y="17" width="6" height="3.2" fill="#fff"/><rect x="8.5" y="18.2" width="3" height="1.2" fill="#000"/><rect x="14" y="17" width="6" height="3.2" fill="#fff"/><rect x="15.5" y="18.2" width="3" height="1.2" fill="#000"/><rect x="21" y="17" width="6" height="3.2" fill="#fff"/><rect x="22.5" y="18.2" width="3" height="1.2" fill="#000"/><rect x="1" y="21" width="5" height="4" fill="#6e6e6e"/><rect x="2" y="22.5" width="3" height="1" fill="#fff"/><rect x="7" y="21" width="6" height="3.2" fill="#fff"/><rect x="8.5" y="22.2" width="3" height="1.2" fill="#000"/><rect x="14" y="21" width="6" height="3.2" fill="#fff"/><rect x="15.5" y="22.2" width="3" height="1.2" fill="#000"/><rect x="21" y="21" width="6" height="3.2" fill="#fff"/><rect x="22.5" y="22.2" width="3" height="1.2" fill="#000"/><rect x="1" y="25" width="5" height="4" fill="#6e6e6e"/><rect x="2" y="26.5" width="3" height="1" fill="#fff"/><rect x="7" y="25" width="6" height="3.2" fill="#fff"/><rect x="8.5" y="26.2" width="3" height="1.2" fill="#000"/><rect x="14" y="25" width="6" height="3.2" fill="#fff"/><rect x="15.5" y="26.2" width="3" height="1.2" fill="#000"/><rect x="21" y="25" width="6" height="3.2" fill="#fff"/><rect x="22.5" y="26.2" width="3" height="1.2" fill="#000"/>
<circle cx="25" cy="25.5" r="4.7" fill="#E00000"/><circle cx="25.3" cy="26" r="3.6" fill="#F01010"/><rect x="22.7" y="22.5" width="1.8" height="1.8" fill="#fff"/>
</svg>
<div class="a" style="left:25.50px;top:381.58px;color:#000;font-family:'Liberation Serif',serif;font-size:13.28px;line-height:13.28px;font-weight:normal;white-space:pre;-webkit-text-stroke:0.25px #000;"><span style="position:absolute;top:0;left:0.00px;width:7px;text-align:center;transform:scaleX(0.900)">S</span><span style="position:absolute;top:0;left:7.00px;width:7px;text-align:center">a</span><span style="position:absolute;top:0;left:14.00px;width:7px;text-align:center">s</span><span style="position:absolute;top:0;left:21.00px;width:7px;text-align:center;transform:scaleX(0.644)">m</span><span style="position:absolute;top:0;left:28.00px;width:7px;text-align:center">b</span><span style="position:absolute;top:0;left:35.00px;width:7px;text-align:center">c</span></div>
<svg class="a" style="left:108px;top:347px" width="34" height="34" viewBox="0 0 34 34">
<rect x="0" y="0" width="28" height="29" fill="#000"/>
<rect x="1" y="1" width="26" height="3.6" fill="#701010"/><rect x="1.8" y="2" width="4" height="1.2" fill="#fff"/><rect x="8.4" y="2" width="4" height="1.2" fill="#fff"/><rect x="15.0" y="2" width="4" height="1.2" fill="#fff"/><rect x="21.6" y="2" width="4" height="1.2" fill="#fff"/>
<rect x="1" y="5" width="26" height="23" fill="#a8a8a8"/><rect x="1" y="5" width="5" height="4" fill="#6e6e6e"/><rect x="2" y="6.5" width="3" height="1" fill="#fff"/><rect x="7" y="5" width="6" height="3.2" fill="#fff"/><rect x="8.5" y="6.2" width="3" height="1.2" fill="#000"/><rect x="14" y="5" width="6" height="3.2" fill="#fff"/><rect x="15.5" y="6.2" width="3" height="1.2" fill="#000"/><rect x="21" y="5" width="6" height="3.2" fill="#fff"/><rect x="22.5" y="6.2" width="3" height="1.2" fill="#000"/><rect x="1" y="9" width="5" height="4" fill="#6e6e6e"/><rect x="2" y="10.5" width="3" height="1" fill="#fff"/><rect x="7" y="9" width="6" height="3.2" fill="#fff"/><rect x="8.5" y="10.2" width="3" height="1.2" fill="#000"/><rect x="14" y="9" width="6" height="3.2" fill="#fff"/><rect x="15.5" y="10.2" width="3" height="1.2" fill="#000"/><rect x="21" y="9" width="6" height="3.2" fill="#fff"/><rect x="22.5" y="10.2" width="3" height="1.2" fill="#000"/><rect x="1" y="13" width="5" height="4" fill="#6e6e6e"/><rect x="2" y="14.5" width="3" height="1" fill="#fff"/><rect x="7" y="13" width="6" height="3.2" fill="#fff"/><rect x="8.5" y="14.2" width="3" height="1.2" fill="#000"/><rect x="14" y="13" width="6" height="3.2" fill="#fff"/><rect x="15.5" y="14.2" width="3" height="1.2" fill="#000"/><rect x="21" y="13" width="6" height="3.2" fill="#fff"/><rect x="22.5" y="14.2" width="3" height="1.2" fill="#000"/><rect x="1" y="17" width="5" height="4" fill="#6e6e6e"/><rect x="2" y="18.5" width="3" height="1" fill="#fff"/><rect x="7" y="17" width="6" height="3.2" fill="#fff"/><rect x="8.5" y="18.2" width="3" height="1.2" fill="#000"/><rect x="14" y="17" width="6" height="3.2" fill="#fff"/><rect x="15.5" y="18.2" width="3" height="1.2" fill="#000"/><rect x="21" y="17" width="6" height="3.2" fill="#fff"/><rect x="22.5" y="18.2" width="3" height="1.2" fill="#000"/><rect x="1" y="21" width="5" height="4" fill="#6e6e6e"/><rect x="2" y="22.5" width="3" height="1" fill="#fff"/><rect x="7" y="21" width="6" height="3.2" fill="#fff"/><rect x="8.5" y="22.2" width="3" height="1.2" fill="#000"/><rect x="14" y="21" width="6" height="3.2" fill="#fff"/><rect x="15.5" y="22.2" width="3" height="1.2" fill="#000"/><rect x="21" y="21" width="6" height="3.2" fill="#fff"/><rect x="22.5" y="22.2" width="3" height="1.2" fill="#000"/><rect x="1" y="25" width="5" height="4" fill="#6e6e6e"/><rect x="2" y="26.5" width="3" height="1" fill="#fff"/><rect x="7" y="25" width="6" height="3.2" fill="#fff"/><rect x="8.5" y="26.2" width="3" height="1.2" fill="#000"/><rect x="14" y="25" width="6" height="3.2" fill="#fff"/><rect x="15.5" y="26.2" width="3" height="1.2" fill="#000"/><rect x="21" y="25" width="6" height="3.2" fill="#fff"/><rect x="22.5" y="26.2" width="3" height="1.2" fill="#000"/>
<circle cx="25" cy="25.5" r="4.7" fill="#E00000"/><circle cx="25.3" cy="26" r="3.6" fill="#F01010"/><rect x="22.7" y="22.5" width="1.8" height="1.8" fill="#fff"/>
</svg>
<div class="a" style="left:97.50px;top:381.58px;color:#000;font-family:'Liberation Serif',serif;font-size:13.28px;line-height:13.28px;font-weight:normal;white-space:pre;-webkit-text-stroke:0.25px #000;"><span style="position:absolute;top:0;left:0.00px;width:7px;text-align:center;transform:scaleX(0.900)">S</span><span style="position:absolute;top:0;left:7.00px;width:7px;text-align:center">a</span><span style="position:absolute;top:0;left:14.00px;width:7px;text-align:center">s</span><span style="position:absolute;top:0;left:21.00px;width:7px;text-align:center">p</span><span style="position:absolute;top:0;left:28.00px;width:7px;text-align:center">a</span><span style="position:absolute;top:0;left:35.00px;width:7px;text-align:center">r</span><span style="position:absolute;top:0;left:42.00px;width:7px;text-align:center;transform:scaleX(0.644)">m</span></div>
<svg class="a" style="left:32px;top:422px" width="34" height="34" viewBox="0 0 34 34">
<rect x="0" y="0" width="28" height="29" fill="#000"/>
<rect x="1" y="1" width="26" height="3.6" fill="#701010"/><rect x="1.8" y="2" width="4" height="1.2" fill="#fff"/><rect x="8.4" y="2" width="4" height="1.2" fill="#fff"/><rect x="15.0" y="2" width="4" height="1.2" fill="#fff"/><rect x="21.6" y="2" width="4" height="1.2" fill="#fff"/>
<rect x="1" y="5" width="26" height="23" fill="#a8a8a8"/><rect x="1" y="5" width="5" height="4" fill="#6e6e6e"/><rect x="2" y="6.5" width="3" height="1" fill="#fff"/><rect x="7" y="5" width="6" height="3.2" fill="#fff"/><rect x="8.5" y="6.2" width="3" height="1.2" fill="#000"/><rect x="14" y="5" width="6" height="3.2" fill="#fff"/><rect x="15.5" y="6.2" width="3" height="1.2" fill="#000"/><rect x="21" y="5" width="6" height="3.2" fill="#fff"/><rect x="22.5" y="6.2" width="3" height="1.2" fill="#000"/><rect x="1" y="9" width="5" height="4" fill="#6e6e6e"/><rect x="2" y="10.5" width="3" height="1" fill="#fff"/><rect x="7" y="9" width="6" height="3.2" fill="#fff"/><rect x="8.5" y="10.2" width="3" height="1.2" fill="#000"/><rect x="14" y="9" width="6" height="3.2" fill="#fff"/><rect x="15.5" y="10.2" width="3" height="1.2" fill="#000"/><rect x="21" y="9" width="6" height="3.2" fill="#fff"/><rect x="22.5" y="10.2" width="3" height="1.2" fill="#000"/><rect x="1" y="13" width="5" height="4" fill="#6e6e6e"/><rect x="2" y="14.5" width="3" height="1" fill="#fff"/><rect x="7" y="13" width="6" height="3.2" fill="#fff"/><rect x="8.5" y="14.2" width="3" height="1.2" fill="#000"/><rect x="14" y="13" width="6" height="3.2" fill="#fff"/><rect x="15.5" y="14.2" width="3" height="1.2" fill="#000"/><rect x="21" y="13" width="6" height="3.2" fill="#fff"/><rect x="22.5" y="14.2" width="3" height="1.2" fill="#000"/><rect x="1" y="17" width="5" height="4" fill="#6e6e6e"/><rect x="2" y="18.5" width="3" height="1" fill="#fff"/><rect x="7" y="17" width="6" height="3.2" fill="#fff"/><rect x="8.5" y="18.2" width="3" height="1.2" fill="#000"/><rect x="14" y="17" width="6" height="3.2" fill="#fff"/><rect x="15.5" y="18.2" width="3" height="1.2" fill="#000"/><rect x="21" y="17" width="6" height="3.2" fill="#fff"/><rect x="22.5" y="18.2" width="3" height="1.2" fill="#000"/><rect x="1" y="21" width="5" height="4" fill="#6e6e6e"/><rect x="2" y="22.5" width="3" height="1" fill="#fff"/><rect x="7" y="21" width="6" height="3.2" fill="#fff"/><rect x="8.5" y="22.2" width="3" height="1.2" fill="#000"/><rect x="14" y="21" width="6" height="3.2" fill="#fff"/><rect x="15.5" y="22.2" width="3" height="1.2" fill="#000"/><rect x="21" y="21" width="6" height="3.2" fill="#fff"/><rect x="22.5" y="22.2" width="3" height="1.2" fill="#000"/><rect x="1" y="25" width="5" height="4" fill="#6e6e6e"/><rect x="2" y="26.5" width="3" height="1" fill="#fff"/><rect x="7" y="25" width="6" height="3.2" fill="#fff"/><rect x="8.5" y="26.2" width="3" height="1.2" fill="#000"/><rect x="14" y="25" width="6" height="3.2" fill="#fff"/><rect x="15.5" y="26.2" width="3" height="1.2" fill="#000"/><rect x="21" y="25" width="6" height="3.2" fill="#fff"/><rect x="22.5" y="26.2" width="3" height="1.2" fill="#000"/>
<circle cx="25" cy="25.5" r="4.7" fill="#E00000"/><circle cx="25.3" cy="26" r="3.6" fill="#F01010"/><rect x="22.7" y="22.5" width="1.8" height="1.8" fill="#fff"/>
</svg>
<div class="a" style="left:25.50px;top:456.58px;color:#000;font-family:'Liberation Serif',serif;font-size:13.28px;line-height:13.28px;font-weight:normal;white-space:pre;-webkit-text-stroke:0.25px #000;"><span style="position:absolute;top:0;left:0.00px;width:7px;text-align:center;transform:scaleX(0.900)">S</span><span style="position:absolute;top:0;left:7.00px;width:7px;text-align:center">c</span><span style="position:absolute;top:0;left:14.00px;width:7px;text-align:center">o</span><span style="position:absolute;top:0;left:21.00px;width:7px;text-align:center">r</span><span style="position:absolute;top:0;left:28.00px;width:7px;text-align:center">e</span><span style="position:absolute;top:0;left:35.00px;width:7px;text-align:center">1</span></div>
<svg class="a" style="left:107px;top:422px" width="34" height="34" viewBox="0 0 34 34">
<defs><pattern id="dith107422" width="2" height="2" patternUnits="userSpaceOnUse"><rect width="2" height="2" fill="#D4D860"/><rect width="1" height="1" fill="#EEEEA8"/><rect x="1" y="1" width="1" height="1" fill="#EEEEA8"/></pattern></defs>
<path d="M0.5 5.5 L4 1.5 L15 1.5 L18 5.5 L28.5 5.5 L28.5 28.5 L0.5 28.5 Z" fill="url(#dith107422)" stroke="#5a5a48" stroke-width="1"/>
<path d="M1 6 L4.2 2.2 L14.7 2.2 L17 6 Z" fill="#F2F0C8"/>
<path d="M29 6 L29 29 L1 29" fill="none" stroke="#000" stroke-width="1.6"/>
<circle cx="25.6" cy="25.6" r="4.6" fill="#E00000"/><circle cx="26" cy="26.2" r="3.6" fill="#F01010"/><rect x="23.2" y="22.6" width="1.8" height="1.8" fill="#fff"/>
</svg>
<div class="a" style="left:94.00px;top:456.58px;color:#000;font-family:'Liberation Serif',serif;font-size:13.28px;line-height:13.28px;font-weight:normal;white-space:pre;-webkit-text-stroke:0.25px #000;"><span style="position:absolute;top:0;left:0.00px;width:7px;text-align:center">_</span><span style="position:absolute;top:0;left:7.00px;width:7px;text-align:center">a</span><span style="position:absolute;top:0;left:14.00px;width:7px;text-align:center">n</span><span style="position:absolute;top:0;left:21.00px;width:7px;text-align:center">a</span><span style="position:absolute;top:0;left:28.00px;width:7px;text-align:center">l</span><span style="position:absolute;top:0;left:35.00px;width:7px;text-align:center">y</span><span style="position:absolute;top:0;left:42.00px;width:7px;text-align:center">s</span><span style="position:absolute;top:0;left:49.00px;width:7px;text-align:center">t</span></div>
<svg class="a" style="left:32px;top:497px" width="34" height="34" viewBox="0 0 34 34">
<rect x="0" y="0" width="28" height="29" fill="#000"/>
<rect x="1" y="1" width="26" height="3.6" fill="#701010"/><rect x="1.8" y="2" width="4" height="1.2" fill="#fff"/><rect x="8.4" y="2" width="4" height="1.2" fill="#fff"/><rect x="15.0" y="2" width="4" height="1.2" fill="#fff"/><rect x="21.6" y="2" width="4" height="1.2" fill="#fff"/>
<rect x="1" y="5" width="26" height="23" fill="#a8a8a8"/><rect x="1" y="5" width="5" height="4" fill="#6e6e6e"/><rect x="2" y="6.5" width="3" height="1" fill="#fff"/><rect x="7" y="5" width="6" height="3.2" fill="#fff"/><rect x="8.5" y="6.2" width="3" height="1.2" fill="#000"/><rect x="14" y="5" width="6" height="3.2" fill="#fff"/><rect x="15.5" y="6.2" width="3" height="1.2" fill="#000"/><rect x="21" y="5" width="6" height="3.2" fill="#fff"/><rect x="22.5" y="6.2" width="3" height="1.2" fill="#000"/><rect x="1" y="9" width="5" height="4" fill="#6e6e6e"/><rect x="2" y="10.5" width="3" height="1" fill="#fff"/><rect x="7" y="9" width="6" height="3.2" fill="#fff"/><rect x="8.5" y="10.2" width="3" height="1.2" fill="#000"/><rect x="14" y="9" width="6" height="3.2" fill="#fff"/><rect x="15.5" y="10.2" width="3" height="1.2" fill="#000"/><rect x="21" y="9" width="6" height="3.2" fill="#fff"/><rect x="22.5" y="10.2" width="3" height="1.2" fill="#000"/><rect x="1" y="13" width="5" height="4" fill="#6e6e6e"/><rect x="2" y="14.5" width="3" height="1" fill="#fff"/><rect x="7" y="13" width="6" height="3.2" fill="#fff"/><rect x="8.5" y="14.2" width="3" height="1.2" fill="#000"/><rect x="14" y="13" width="6" height="3.2" fill="#fff"/><rect x="15.5" y="14.2" width="3" height="1.2" fill="#000"/><rect x="21" y="13" width="6" height="3.2" fill="#fff"/><rect x="22.5" y="14.2" width="3" height="1.2" fill="#000"/><rect x="1" y="17" width="5" height="4" fill="#6e6e6e"/><rect x="2" y="18.5" width="3" height="1" fill="#fff"/><rect x="7" y="17" width="6" height="3.2" fill="#fff"/><rect x="8.5" y="18.2" width="3" height="1.2" fill="#000"/><rect x="14" y="17" width="6" height="3.2" fill="#fff"/><rect x="15.5" y="18.2" width="3" height="1.2" fill="#000"/><rect x="21" y="17" width="6" height="3.2" fill="#fff"/><rect x="22.5" y="18.2" width="3" height="1.2" fill="#000"/><rect x="1" y="21" width="5" height="4" fill="#6e6e6e"/><rect x="2" y="22.5" width="3" height="1" fill="#fff"/><rect x="7" y="21" width="6" height="3.2" fill="#fff"/><rect x="8.5" y="22.2" width="3" height="1.2" fill="#000"/><rect x="14" y="21" width="6" height="3.2" fill="#fff"/><rect x="15.5" y="22.2" width="3" height="1.2" fill="#000"/><rect x="21" y="21" width="6" height="3.2" fill="#fff"/><rect x="22.5" y="22.2" width="3" height="1.2" fill="#000"/><rect x="1" y="25" width="5" height="4" fill="#6e6e6e"/><rect x="2" y="26.5" width="3" height="1" fill="#fff"/><rect x="7" y="25" width="6" height="3.2" fill="#fff"/><rect x="8.5" y="26.2" width="3" height="1.2" fill="#000"/><rect x="14" y="25" width="6" height="3.2" fill="#fff"/><rect x="15.5" y="26.2" width="3" height="1.2" fill="#000"/><rect x="21" y="25" width="6" height="3.2" fill="#fff"/><rect x="22.5" y="26.2" width="3" height="1.2" fill="#000"/>
<circle cx="25" cy="25.5" r="4.7" fill="#E00000"/><circle cx="25.3" cy="26" r="3.6" fill="#F01010"/><rect x="22.7" y="22.5" width="1.8" height="1.8" fill="#fff"/>
</svg>
<div class="a" style="left:18.50px;top:531.58px;color:#000;font-family:'Liberation Serif',serif;font-size:13.28px;line-height:13.28px;font-weight:normal;white-space:pre;-webkit-text-stroke:0.25px #000;"><span style="position:absolute;top:0;left:0.00px;width:7px;text-align:center">_</span><span style="position:absolute;top:0;left:7.00px;width:7px;text-align:center">a</span><span style="position:absolute;top:0;left:14.00px;width:7px;text-align:center">s</span><span style="position:absolute;top:0;left:21.00px;width:7px;text-align:center">t</span><span style="position:absolute;top:0;left:28.00px;width:7px;text-align:center">d</span><span style="position:absolute;top:0;left:35.00px;width:7px;text-align:center">c</span><span style="position:absolute;top:0;left:42.00px;width:7px;text-align:center">o</span><span style="position:absolute;top:0;left:49.00px;width:7px;text-align:center">l</span></div>
<svg class="a" style="left:108px;top:497px" width="34" height="34" viewBox="0 0 34 34">
<rect x="0" y="0" width="28" height="29" fill="#000"/>
<rect x="1" y="1" width="26" height="3.6" fill="#701010"/><rect x="1.8" y="2" width="4" height="1.2" fill="#fff"/><rect x="8.4" y="2" width="4" height="1.2" fill="#fff"/><rect x="15.0" y="2" width="4" height="1.2" fill="#fff"/><rect x="21.6" y="2" width="4" height="1.2" fill="#fff"/>
<rect x="1" y="5" width="26" height="23" fill="#a8a8a8"/><rect x="1" y="5" width="5" height="4" fill="#6e6e6e"/><rect x="2" y="6.5" width="3" height="1" fill="#fff"/><rect x="7" y="5" width="6" height="3.2" fill="#fff"/><rect x="8.5" y="6.2" width="3" height="1.2" fill="#000"/><rect x="14" y="5" width="6" height="3.2" fill="#fff"/><rect x="15.5" y="6.2" width="3" height="1.2" fill="#000"/><rect x="21" y="5" width="6" height="3.2" fill="#fff"/><rect x="22.5" y="6.2" width="3" height="1.2" fill="#000"/><rect x="1" y="9" width="5" height="4" fill="#6e6e6e"/><rect x="2" y="10.5" width="3" height="1" fill="#fff"/><rect x="7" y="9" width="6" height="3.2" fill="#fff"/><rect x="8.5" y="10.2" width="3" height="1.2" fill="#000"/><rect x="14" y="9" width="6" height="3.2" fill="#fff"/><rect x="15.5" y="10.2" width="3" height="1.2" fill="#000"/><rect x="21" y="9" width="6" height="3.2" fill="#fff"/><rect x="22.5" y="10.2" width="3" height="1.2" fill="#000"/><rect x="1" y="13" width="5" height="4" fill="#6e6e6e"/><rect x="2" y="14.5" width="3" height="1" fill="#fff"/><rect x="7" y="13" width="6" height="3.2" fill="#fff"/><rect x="8.5" y="14.2" width="3" height="1.2" fill="#000"/><rect x="14" y="13" width="6" height="3.2" fill="#fff"/><rect x="15.5" y="14.2" width="3" height="1.2" fill="#000"/><rect x="21" y="13" width="6" height="3.2" fill="#fff"/><rect x="22.5" y="14.2" width="3" height="1.2" fill="#000"/><rect x="1" y="17" width="5" height="4" fill="#6e6e6e"/><rect x="2" y="18.5" width="3" height="1" fill="#fff"/><rect x="7" y="17" width="6" height="3.2" fill="#fff"/><rect x="8.5" y="18.2" width="3" height="1.2" fill="#000"/><rect x="14" y="17" width="6" height="3.2" fill="#fff"/><rect x="15.5" y="18.2" width="3" height="1.2" fill="#000"/><rect x="21" y="17" width="6" height="3.2" fill="#fff"/><rect x="22.5" y="18.2" width="3" height="1.2" fill="#000"/><rect x="1" y="21" width="5" height="4" fill="#6e6e6e"/><rect x="2" y="22.5" width="3" height="1" fill="#fff"/><rect x="7" y="21" width="6" height="3.2" fill="#fff"/><rect x="8.5" y="22.2" width="3" height="1.2" fill="#000"/><rect x="14" y="21" width="6" height="3.2" fill="#fff"/><rect x="15.5" y="22.2" width="3" height="1.2" fill="#000"/><rect x="21" y="21" width="6" height="3.2" fill="#fff"/><rect x="22.5" y="22.2" width="3" height="1.2" fill="#000"/><rect x="1" y="25" width="5" height="4" fill="#6e6e6e"/><rect x="2" y="26.5" width="3" height="1" fill="#fff"/><rect x="7" y="25" width="6" height="3.2" fill="#fff"/><rect x="8.5" y="26.2" width="3" height="1.2" fill="#000"/><rect x="14" y="25" width="6" height="3.2" fill="#fff"/><rect x="15.5" y="26.2" width="3" height="1.2" fill="#000"/><rect x="21" y="25" width="6" height="3.2" fill="#fff"/><rect x="22.5" y="26.2" width="3" height="1.2" fill="#000"/>
<circle cx="25" cy="25.5" r="4.7" fill="#E00000"/><circle cx="25.3" cy="26" r="3.6" fill="#F01010"/><rect x="22.7" y="22.5" width="1.8" height="1.8" fill="#fff"/>
</svg>
<div class="a" style="left:94.00px;top:531.58px;color:#000;font-family:'Liberation Serif',serif;font-size:13.28px;line-height:13.28px;font-weight:normal;white-space:pre;-webkit-text-stroke:0.25px #000;"><span style="position:absolute;top:0;left:0.00px;width:7px;text-align:center">_</span><span style="position:absolute;top:0;left:7.00px;width:7px;text-align:center">a</span><span style="position:absolute;top:0;left:14.00px;width:7px;text-align:center">s</span><span style="position:absolute;top:0;left:21.00px;width:7px;text-align:center">t</span><span style="position:absolute;top:0;left:28.00px;width:7px;text-align:center">d</span><span style="position:absolute;top:0;left:35.00px;width:7px;text-align:center">t</span><span style="position:absolute;top:0;left:42.00px;width:7px;text-align:center">a</span><span style="position:absolute;top:0;left:49.00px;width:7px;text-align:center">b</span></div>
<div class="a" style="left:5px;top:692px;width:87px;height:21px;background:#ECE9D8;border-top:2px solid #A5A291;border-bottom:2px solid #A5A291;border-left:1px solid #fff"></div>
<div class="a" style="left:92px;top:690px;width:93px;height:25px;background:#ECE9D8;border-right:2px solid #716F64;border-bottom:2px solid #716F64;border-left:1px solid #fff"></div>
<svg class="a" style="left:10px;top:695px" width="18" height="16" viewBox="0 0 18 16">
<rect x="6.5" y="0.5" width="10" height="8" fill="#fff" stroke="#000"/><rect x="0.5" y="4.5" width="11" height="10" fill="#fff" stroke="#000"/>
<rect x="2" y="8" width="2.5" height="5" fill="#e02020"/><rect x="4.5" y="9" width="2.5" height="4" fill="#20a020"/><rect x="7" y="7" width="3" height="6" fill="#2020d0"/>
</svg>
<div class="a" style="left:30.50px;top:698.33px;color:#000;font-family:'Liberation Serif',serif;font-size:11.91px;line-height:11.91px;font-weight:bold;white-space:pre;"><span style="position:absolute;top:0;left:0.00px;width:6px;text-align:center;transform:scaleX(0.663)">R</span><span style="position:absolute;top:0;left:6.00px;width:6px;text-align:center">e</span><span style="position:absolute;top:0;left:12.00px;width:6px;text-align:center">s</span><span style="position:absolute;top:0;left:18.00px;width:6px;text-align:center;transform:scaleX(0.861)">u</span><span style="position:absolute;top:0;left:24.00px;width:6px;text-align:center">l</span><span style="position:absolute;top:0;left:30.00px;width:6px;text-align:center">t</span><span style="position:absolute;top:0;left:36.00px;width:6px;text-align:center">s</span></div>
<svg class="a" style="left:96px;top:694px" width="18" height="18" viewBox="0 0 18 18">
<path d="M0.5 3.5 L3 1 L8 1 L9.5 3.5 L16.5 3.5 L16.5 16.5 L0.5 16.5 Z" fill="#E6E35A" stroke="#555"/>
<circle cx="7" cy="9" r="3.8" fill="#30B0E0" stroke="#000" stroke-width="1.4"/><path d="M9.5 11.5 L14 16" stroke="#000" stroke-width="2"/>
</svg>
<div class="a" style="left:115.50px;top:698.83px;color:#000;font-family:'Liberation Serif',serif;font-size:11.91px;line-height:11.91px;font-weight:bold;white-space:pre;"><span style="position:absolute;top:0;left:0.00px;width:6px;text-align:center;transform:scaleX(0.718)">E</span><span style="position:absolute;top:0;left:6.00px;width:6px;text-align:center;transform:scaleX(0.957)">x</span><span style="position:absolute;top:0;left:12.00px;width:6px;text-align:center;transform:scaleX(0.861)">p</span><span style="position:absolute;top:0;left:18.00px;width:6px;text-align:center">l</span><span style="position:absolute;top:0;left:24.00px;width:6px;text-align:center;transform:scaleX(0.957)">o</span><span style="position:absolute;top:0;left:30.00px;width:6px;text-align:center">r</span><span style="position:absolute;top:0;left:36.00px;width:6px;text-align:center">e</span><span style="position:absolute;top:0;left:42.00px;width:6px;text-align:center">r</span></div>
<div class="a" style="left:197px;top:671px;width:827px;height:1px;background:#8C8A7C"></div>
<div class="a" style="left:197px;top:672px;width:827px;height:1px;background:#fff"></div>
<div class="a tab" style="left:200px"></div>
<div class="a" style="left:242.00px;top:685.41px;color:#000;font-family:'Liberation Serif',serif;font-size:19.69px;line-height:19.69px;font-weight:normal;white-space:pre;"><span style="position:absolute;top:0;left:0.00px;width:10.1px;text-align:center;transform:scaleX(0.675)">O</span><span style="position:absolute;top:0;left:10.10px;width:10.1px;text-align:center;transform:scaleX(0.974)">u</span><span style="position:absolute;top:0;left:20.20px;width:10.1px;text-align:center">t</span><span style="position:absolute;top:0;left:30.30px;width:10.1px;text-align:center;transform:scaleX(0.974)">p</span><span style="position:absolute;top:0;left:40.40px;width:10.1px;text-align:center;transform:scaleX(0.974)">u</span><span style="position:absolute;top:0;left:50.50px;width:10.1px;text-align:center">t</span><span style="position:absolute;top:0;left:70.70px;width:10.1px;text-align:center">-</span><span style="position:absolute;top:0;left:80.80px;width:10.1px;text-align:center">.</span><span style="position:absolute;top:0;left:90.90px;width:10.1px;text-align:center">.</span><span style="position:absolute;top:0;left:101.00px;width:10.1px;text-align:center">.</span></div>
<div class="a tab" style="left:365px"></div>
<div class="a" style="left:407.00px;top:685.41px;color:#000;font-family:'Liberation Serif',serif;font-size:19.69px;line-height:19.69px;font-weight:normal;white-space:pre;"><span style="position:absolute;top:0;left:0.00px;width:10.1px;text-align:center;transform:scaleX(0.798)">L</span><span style="position:absolute;top:0;left:10.10px;width:10.1px;text-align:center;transform:scaleX(0.974)">o</span><span style="position:absolute;top:0;left:20.20px;width:10.1px;text-align:center;transform:scaleX(0.974)">g</span><span style="position:absolute;top:0;left:40.40px;width:10.1px;text-align:center">-</span><span style="position:absolute;top:0;left:60.60px;width:10.1px;text-align:center">(</span><span style="position:absolute;top:0;left:70.70px;width:10.1px;text-align:center;transform:scaleX(0.675)">U</span><span style="position:absolute;top:0;left:80.80px;width:10.1px;text-align:center">.</span><span style="position:absolute;top:0;left:90.90px;width:10.1px;text-align:center">.</span><span style="position:absolute;top:0;left:101.00px;width:10.1px;text-align:center">.</span></div>
<div class="a tab" style="left:529px"></div>
<div class="a" style="left:571.00px;top:685.41px;color:#000;font-family:'Liberation Serif',serif;font-size:19.69px;line-height:19.69px;font-weight:normal;white-space:pre;"><span style="position:absolute;top:0;left:0.00px;width:10.1px;text-align:center;transform:scaleX(0.798)">E</span><span style="position:absolute;top:0;left:10.10px;width:10.1px;text-align:center;transform:scaleX(0.974)">d</span><span style="position:absolute;top:0;left:20.20px;width:10.1px;text-align:center">i</span><span style="position:absolute;top:0;left:30.30px;width:10.1px;text-align:center">t</span><span style="position:absolute;top:0;left:40.40px;width:10.1px;text-align:center;transform:scaleX(0.974)">o</span><span style="position:absolute;top:0;left:50.50px;width:10.1px;text-align:center">r</span><span style="position:absolute;top:0;left:70.70px;width:10.1px;text-align:center">-</span><span style="position:absolute;top:0;left:80.80px;width:10.1px;text-align:center">.</span><span style="position:absolute;top:0;left:90.90px;width:10.1px;text-align:center">.</span><span style="position:absolute;top:0;left:101.00px;width:10.1px;text-align:center">.</span></div>
<div class="a tab" style="left:692px"></div>
<div class="a" style="left:734.00px;top:685.41px;color:#000;font-family:'Liberation Serif',serif;font-size:19.69px;line-height:19.69px;font-weight:normal;white-space:pre;"><span style="position:absolute;top:0;left:0.00px;width:10.1px;text-align:center;transform:scaleX(0.675)">A</span><span style="position:absolute;top:0;left:10.10px;width:10.1px;text-align:center;transform:scaleX(0.974)">n</span><span style="position:absolute;top:0;left:20.20px;width:10.1px;text-align:center">a</span><span style="position:absolute;top:0;left:30.30px;width:10.1px;text-align:center">l</span><span style="position:absolute;top:0;left:40.40px;width:10.1px;text-align:center;transform:scaleX(0.974)">y</span><span style="position:absolute;top:0;left:50.50px;width:10.1px;text-align:center">s</span><span style="position:absolute;top:0;left:60.60px;width:10.1px;text-align:center">t</span><span style="position:absolute;top:0;left:70.70px;width:10.1px;text-align:center">:</span><span style="position:absolute;top:0;left:80.80px;width:10.1px;text-align:center">.</span><span style="position:absolute;top:0;left:90.90px;width:10.1px;text-align:center">.</span><span style="position:absolute;top:0;left:101.00px;width:10.1px;text-align:center">.</span></div>
<div class="a" style="left:855px;top:675px;width:160px;height:39px;background:#F3F1E9;border-top:2px solid #7A7868;border-left:2px solid #7A7868;border-right:1px solid #fff;border-bottom:1px solid #fff"></div>
<div class="a" style="left:894.00px;top:685.41px;color:#000;font-family:'Liberation Serif',serif;font-size:19.69px;line-height:19.69px;font-weight:bold;white-space:pre;"><span style="position:absolute;top:0;left:0.00px;width:10.1px;text-align:center;transform:scaleX(0.626)">H</span><span style="position:absolute;top:0;left:10.10px;width:10.1px;text-align:center">i</span><span style="position:absolute;top:0;left:20.20px;width:10.1px;text-align:center">s</span><span style="position:absolute;top:0;left:30.30px;width:10.1px;text-align:center">t</span><span style="position:absolute;top:0;left:40.40px;width:10.1px;text-align:center;transform:scaleX(0.974)">o</span><span style="position:absolute;top:0;left:50.50px;width:10.1px;text-align:center;transform:scaleX(0.974)">g</span><span style="position:absolute;top:0;left:60.60px;width:10.1px;text-align:center">r</span><span style="position:absolute;top:0;left:70.70px;width:10.1px;text-align:center">.</span><span style="position:absolute;top:0;left:80.80px;width:10.1px;text-align:center">.</span><span style="position:absolute;top:0;left:90.90px;width:10.1px;text-align:center">.</span></div>
<svg class="a" style="left:200px;top:675px" width="40" height="40" viewBox="0 0 768 768">
<path d="M205 105 L545 105 L660 220 L660 640 L205 640 Z" fill="#fff" stroke="#000" stroke-width="30"/>
<path d="M545 105 L545 215 L660 215" fill="none" stroke="#000" stroke-width="20"/>
<path d="M270 182h110 M270 220h130 M270 258h75 M270 296h95 M270 334h130 M270 372h110" stroke="#707070" stroke-width="14"/>
<path d="M480 235v145 M535 310v70 M595 270v110" stroke="#707070" stroke-width="28"/>
<rect x="275" y="470" width="310" height="110" fill="none" stroke="#707070" stroke-width="16"/>
<path d="M380 470v110 M490 470v110 M275 525h310" stroke="#707070" stroke-width="14"/>
</svg>
<svg class="a" style="left:365px;top:675px" width="40" height="40" viewBox="0 0 768 768">
<path d="M185 125 L595 125 L595 635 L215 635 Q185 635 185 605 Z" fill="#fff" stroke="#000" stroke-width="34"/>
<path d="M590 150 V640 H220" fill="none" stroke="#000" stroke-width="20"/>
<path d="M195 125 h400" stroke="#000" stroke-width="55" stroke-dasharray="26 30"/>
<path d="M235 200h90 M235 240h180 M235 278h260 M235 355h320 M235 392h240 M235 432h200 M235 508h250 M235 548h280" stroke="#B0B0B0" stroke-width="12"/>
</svg>
<svg class="a" style="left:530px;top:675px" width="40" height="40" viewBox="0 0 768 768">
<path d="M155 125 L555 125 L555 625 L180 625 Q155 625 155 600 Z" fill="#fff" stroke="#000" stroke-width="36"/>
<path d="M170 125 h380" stroke="#000" stroke-width="50" stroke-dasharray="28 30"/>
<path d="M195 240h160 M195 295h140 M195 350h120 M420 410h100 M420 465h100 M420 520h100" stroke="#A0A0A0" stroke-width="10"/>
<path d="M465 150 v200 M370 255 h185" stroke="#0000D0" stroke-width="80"/>
<circle cx="345" cy="320" r="38" fill="#000"/>
<path d="M330 350 L290 470 L200 560 M300 440 L390 500 L380 560 M210 430 L300 410 L400 420" fill="none" stroke="#000" stroke-width="42" stroke-linejoin="round"/>
</svg>
<svg class="a" style="left:692px;top:675px" width="40" height="40" viewBox="0 0 768 768">
<g stroke-width="0">
<path d="M350 150 h22 v190 h-180 v-20 h158 Z" fill="#000"/>
<rect x="160" y="125" width="185" height="195" fill="#F4E8EC" stroke="#8a8a8a" stroke-width="16"/>
<path d="M640 150 h22 v210 h-185 v-20 h163 Z" fill="#000"/>
<path d="M520 360 h22 v210 h-50 v-20 h28 Z" fill="#000"/>
<rect x="285" y="230" width="225" height="320" fill="#D8D8F0" stroke="#A0B0C0" stroke-width="16"/>
<rect x="450" y="125" width="185" height="215" fill="#D0D0F8" stroke="#8a8a8a" stroke-width="16"/>
<path d="M450 500 h22 v145 h-290 v-20 h268 Z" fill="#000"/>
<rect x="140" y="450" width="305" height="180" fill="#E8D8DC" stroke="#8a8a8a" stroke-width="16"/>
</g>
<path d="M215 165 h80 M230 210 L280 260 M280 210 L230 260" stroke="#C03040" stroke-width="26"/>
<path d="M495 180 h100 M495 275 h100 M520 180 v95 M570 180 v95" stroke="#1010C0" stroke-width="26"/>
<path d="M440 270 L370 320 L410 380 L360 440" fill="none" stroke="#1010C0" stroke-width="26"/>
<path d="M340 490 h-110 l60 50 l-60 50 h110" fill="none" stroke="#C03020" stroke-width="28"/>
</svg>
<svg class="a" style="left:855px;top:675px" width="40" height="40" viewBox="0 0 768 768">
<rect x="160" y="150" width="285" height="285" fill="#fff" stroke="#E0E0E0" stroke-width="10"/>
<path d="M200 195 V390 H420" fill="none" stroke="#909090" stroke-width="16"/>
<path d="M235 350 L300 275 L340 320 L415 240" fill="none" stroke="#B020C0" stroke-width="24"/>
<path d="M450 190 V330" stroke="#000" stroke-width="26"/><path d="M180 452 H320" stroke="#000" stroke-width="26"/>
<rect x="330" y="320" width="290" height="300" fill="#fff" stroke="#A0A0A0" stroke-width="16"/>
<path d="M455 440 L455 355 Q510 360 530 410 Z" fill="#E01010"/>
<path d="M455 440 L530 405 Q590 460 560 530 Q520 575 455 570 Z" fill="#10D010"/>
<path d="M455 440 L455 570 Q400 560 370 450 Z" fill="#0010E0"/>
</svg>
<div class="a" style="left:1022px;top:672px;width:2px;height:46px;background:#8C8A7C"></div>
<div class="a" style="left:0;top:718px;width:1024px;height:20px;background:#ECE9D8"></div>
<div class="a" style="left:196px;top:717px;width:828px;height:1px;background:#B5B2A2"></div>
<div class="a" style="left:685px;top:720px;width:225px;height:17px;border-left:1px solid #A5A291;border-top:1px solid #A5A291;border-right:1px solid #fff;border-bottom:1px solid #fff"></div>
<div class="a" style="left:912px;top:720px;width:98px;height:17px;border-left:1px solid #A5A291;border-top:1px solid #A5A291;border-right:1px solid #fff;border-bottom:1px solid #fff"></div>
<div class="a" style="left:686px;top:724px;width:16px;height:9px;background:linear-gradient(#888,#ddd 30%,#aaa 60%,#777);border:1px solid #303030;border-radius:3px"></div>
<div class="a" style="left:704.00px;top:722.02px;color:#000;font-family:'Liberation Serif',serif;font-size:12.52px;line-height:12.52px;font-weight:normal;white-space:pre;-webkit-text-stroke:0.25px #000;"><span style="position:absolute;top:0;left:0.00px;width:7px;text-align:center;transform:scaleX(0.796)">C</span><span style="position:absolute;top:0;left:7.00px;width:7px;text-align:center">:</span><span style="position:absolute;top:0;left:14.00px;width:7px;text-align:center">\</span><span style="position:absolute;top:0;left:21.00px;width:7px;text-align:center;transform:scaleX(0.736)">D</span><span style="position:absolute;top:0;left:28.00px;width:7px;text-align:center">o</span><span style="position:absolute;top:0;left:35.00px;width:7px;text-align:center">c</span><span style="position:absolute;top:0;left:42.00px;width:7px;text-align:center">u</span><span style="position:absolute;top:0;left:49.00px;width:7px;text-align:center;transform:scaleX(0.683)">m</span><span style="position:absolute;top:0;left:56.00px;width:7px;text-align:center">e</span><span style="position:absolute;top:0;left:63.00px;width:7px;text-align:center">n</span><span style="position:absolute;top:0;left:70.00px;width:7px;text-align:center">t</span><span style="position:absolute;top:0;left:77.00px;width:7px;text-align:center">s</span><span style="position:absolute;top:0;left:91.00px;width:7px;text-align:center">a</span><span style="position:absolute;top:0;left:98.00px;width:7px;text-align:center">n</span><span style="position:absolute;top:0;left:105.00px;width:7px;text-align:center">d</span><span style="position:absolute;top:0;left:119.00px;width:7px;text-align:center;transform:scaleX(0.955)">S</span><span style="position:absolute;top:0;left:126.00px;width:7px;text-align:center">e</span><span style="position:absolute;top:0;left:133.00px;width:7px;text-align:center">t</span><span style="position:absolute;top:0;left:140.00px;width:7px;text-align:center">t</span><span style="position:absolute;top:0;left:147.00px;width:7px;text-align:center">i</span><span style="position:absolute;top:0;left:154.00px;width:7px;text-align:center">n</span><span style="position:absolute;top:0;left:161.00px;width:7px;text-align:center">g</span><span style="position:absolute;top:0;left:168.00px;width:7px;text-align:center">s</span><span style="position:absolute;top:0;left:175.00px;width:7px;text-align:center">\</span><span style="position:absolute;top:0;left:182.00px;width:7px;text-align:center">l</span><span style="position:absolute;top:0;left:189.00px;width:7px;text-align:center">y</span><span style="position:absolute;top:0;left:196.00px;width:7px;text-align:center">x</span></div>
<div class="a" style="left:0;top:738px;width:1024px;height:30px;background:linear-gradient(#3168D5 0,#4993E6 2px,#2E6FE0 4px,#245DDB 50%,#2459D8 90%,#1941A5 100%)"></div>
<div class="a" style="left:0;top:738px;width:100px;height:30px;border-radius:0 12px 12px 0;background:linear-gradient(#3C873C 0,#6DBA6D 3px,#46A046 6px,#3A9A3A 50%,#349034 85%,#2A7A2A 100%);box-shadow:inset -3px 0 4px rgba(0,40,0,0.35)"></div>
<svg class="a" style="left:10px;top:743px" width="20" height="20" viewBox="0 0 20 20">
<path d="M3 2.5 Q6 1 9.5 2.5 L8.5 8.5 Q5.5 7 2 8.5 Z" fill="#F05A20"/><path d="M10.5 2.5 Q13.5 4 17.5 2.5 L16.5 8.5 Q13 10 9.5 8.5 Z" fill="#60C030"/>
<path d="M1.8 9.5 Q5 8 8.3 9.5 L7.3 15.5 Q4.3 14 0.8 15.5 Z" fill="#3080F0"/><path d="M9.3 9.5 Q12.5 11 16.3 9.5 L15.3 15.5 Q12 17 8.3 15.5 Z" fill="#F8C020"/>
</svg>
<svg class="a" style="left:30px;top:738px" width="60" height="30" viewBox="0 0 1024 512">
<g fill="none" stroke="#fff" stroke-width="22" stroke-linecap="round">
<path d="M220 105 L470 90 M175 230 L455 212 M285 110 Q270 300 110 385 M400 100 L315 385"/>
<path d="M615 75 L535 255 L625 335 M645 135 Q600 310 470 385 M505 190 L690 180"/>
<path d="M780 75 L690 190 L830 185 M765 135 L810 175 M660 245 L800 245 L775 385 L625 385 Z"/>
</g></svg>
<div class="a tkb" style="left:110px;width:159px;background:linear-gradient(#5594F7,#3D81F3 15%,#3A7BEE 85%,#2F68D8);box-shadow:inset 1px 1px 0 #7AB0FF"></div>
<svg class="a" style="left:120px;top:745px" width="16" height="16" viewBox="0 0 16 16">
<rect x="0" y="0" width="16" height="16" fill="#C85A1A"/><rect x="1.5" y="1.5" width="13" height="13" fill="none" stroke="#F8E8D8" stroke-width="1"/>
<path d="M7 5 A3.5 3.5 0 1 0 10 10 L7 8.5 Z" fill="#fff"/><path d="M8 4h4M9 6h3" stroke="#fff" stroke-width="1"/>
</svg>
<div class="a" style="left:139.50px;top:745.86px;color:#fff;font-family:'Liberation Serif',serif;font-size:12.82px;line-height:12.82px;font-weight:normal;white-space:pre;-webkit-text-stroke:0.25px #fff;"><span style="position:absolute;top:0;left:0.00px;width:7px;text-align:center;transform:scaleX(0.583)">M</span><span style="position:absolute;top:0;left:7.00px;width:7px;text-align:center">i</span><span style="position:absolute;top:0;left:14.00px;width:7px;text-align:center">c</span><span style="position:absolute;top:0;left:21.00px;width:7px;text-align:center">r</span><span style="position:absolute;top:0;left:28.00px;width:7px;text-align:center">o</span><span style="position:absolute;top:0;left:35.00px;width:7px;text-align:center">s</span><span style="position:absolute;top:0;left:42.00px;width:7px;text-align:center">o</span><span style="position:absolute;top:0;left:49.00px;width:7px;text-align:center">f</span><span style="position:absolute;top:0;left:56.00px;width:7px;text-align:center">t</span><span style="position:absolute;top:0;left:70.00px;width:7px;text-align:center;transform:scaleX(0.932)">P</span><span style="position:absolute;top:0;left:77.00px;width:7px;text-align:center">o</span><span style="position:absolute;top:0;left:84.00px;width:7px;text-align:center;transform:scaleX(0.718)">w</span><span style="position:absolute;top:0;left:91.00px;width:7px;text-align:center">.</span><span style="position:absolute;top:0;left:98.00px;width:7px;text-align:center">.</span><span style="position:absolute;top:0;left:105.00px;width:7px;text-align:center">.</span></div>
<div class="a tkb" style="left:270px;width:160px;background:#1E4FC3;box-shadow:inset 1px 1px 1px #0c2c80, inset -1px -1px 0 #3A6AD8"></div>
<svg class="a" style="left:279px;top:739px" width="24" height="24" viewBox="0 0 24 24">
<path d="M3.8 8 L16.3 8 L11 13.5 L9.6 16.5 L8.6 13.2 Z" fill="url(#fun)"/>
<path d="M16.5 8.2 L12 14 L13 16" fill="none" stroke="#101040" stroke-width="1.2"/>
<path d="M2.5 16.5 Q6 20 11 17.3 Q15.5 15 17 9" fill="none" stroke="#0810C8" stroke-width="2"/>
<circle cx="13.8" cy="14.4" r="2.6" fill="#E01818"/><rect x="13" y="13.3" width="1" height="1" fill="#fff"/>
<path d="M10 17.5 L10.5 20" stroke="#101040" stroke-width="1"/>
</svg>
<div class="a" style="left:300.50px;top:745.86px;color:#fff;font-family:'Liberation Serif',serif;font-size:12.82px;line-height:12.82px;font-weight:normal;white-space:pre;-webkit-text-stroke:0.25px #fff;"><span style="position:absolute;top:0;left:0.00px;width:7px;text-align:center;transform:scaleX(0.932)">S</span><span style="position:absolute;top:0;left:7.00px;width:7px;text-align:center;transform:scaleX(0.718)">A</span><span style="position:absolute;top:0;left:14.00px;width:7px;text-align:center;transform:scaleX(0.932)">S</span><span style="position:absolute;top:0;left:28.00px;width:7px;text-align:center">-</span><span style="position:absolute;top:0;left:42.00px;width:7px;text-align:center">[</span><span style="position:absolute;top:0;left:49.00px;width:7px;text-align:center;transform:scaleX(0.718)">H</span><span style="position:absolute;top:0;left:56.00px;width:7px;text-align:center">i</span><span style="position:absolute;top:0;left:63.00px;width:7px;text-align:center">s</span><span style="position:absolute;top:0;left:70.00px;width:7px;text-align:center">t</span><span style="position:absolute;top:0;left:77.00px;width:7px;text-align:center">o</span><span style="position:absolute;top:0;left:84.00px;width:7px;text-align:center">g</span><span style="position:absolute;top:0;left:91.00px;width:7px;text-align:center">.</span><span style="position:absolute;top:0;left:98.00px;width:7px;text-align:center">.</span><span style="position:absolute;top:0;left:105.00px;width:7px;text-align:center">.</span></div>
<div class="a tkb" style="left:433px;width:158px;background:linear-gradient(#5594F7,#3D81F3 15%,#3A7BEE 85%,#2F68D8);box-shadow:inset 1px 1px 0 #7AB0FF"></div>
<svg class="a" style="left:441px;top:745px" width="17" height="17" viewBox="0 0 17 17">
<rect x="2.5" y="0.5" width="12" height="10" fill="#d8d8d0" stroke="#202020"/><rect x="4" y="2" width="9" height="7" fill="#104020"/><path d="M4.5 6 L6.5 4 L8 6 L10 3.5 L12 5" stroke="#40E040" stroke-width="0.8" fill="none"/>
<rect x="0.5" y="11.5" width="15" height="4" fill="#e8e8e0" stroke="#202020"/><path d="M3 13.5h7" stroke="#808080"/>
</svg>
<div class="a" style="left:460.00px;top:745.86px;color:#fff;font-family:'Liberation Serif',serif;font-size:12.82px;line-height:12.82px;font-weight:normal;white-space:pre;-webkit-text-stroke:0.25px #fff;"><span style="position:absolute;top:0;left:0.00px;width:7px;text-align:center;transform:scaleX(0.549)">W</span><span style="position:absolute;top:0;left:7.00px;width:7px;text-align:center">i</span><span style="position:absolute;top:0;left:14.00px;width:7px;text-align:center">n</span><span style="position:absolute;top:0;left:21.00px;width:7px;text-align:center">d</span><span style="position:absolute;top:0;left:28.00px;width:7px;text-align:center">o</span><span style="position:absolute;top:0;left:35.00px;width:7px;text-align:center;transform:scaleX(0.718)">w</span><span style="position:absolute;top:0;left:42.00px;width:7px;text-align:center">s</span></div>
<svg class="a" style="left:512px;top:742px" width="50" height="20" viewBox="0 0 1024 410">
<g fill="none" stroke="#fff" stroke-width="21" stroke-linecap="square">
<path d="M160 90 L85 200 M130 160 L130 330 M300 95 L180 130 M170 215 L330 215 M250 120 L250 320 M160 320 L330 320"/>
<path d="M450 95 L380 190 M430 130 L560 130 L390 235 M440 165 L585 225 M380 240 L565 240 L550 330 L500 325 M470 200 Q450 290 385 330"/>
<path d="M660 95 L635 145 M645 120 L730 120 M775 95 L750 145 M760 120 L850 120 M745 150 L745 170 M640 200 L640 175 L850 175 L850 200 M685 205 L685 330 M685 210 L810 210 L810 262 L685 262 M685 270 L820 270 L820 330 L685 330"/>
</g></svg>
<div class="a" style="left:554.00px;top:745.86px;color:#fff;font-family:'Liberation Serif',serif;font-size:12.82px;line-height:12.82px;font-weight:normal;white-space:pre;-webkit-text-stroke:0.25px #fff;"><span style="position:absolute;top:0;left:0.00px;width:7px;text-align:center">.</span><span style="position:absolute;top:0;left:7.00px;width:7px;text-align:center">.</span><span style="position:absolute;top:0;left:14.00px;width:7px;text-align:center">.</span></div>
<div class="a" style="left:923px;top:738px;width:101px;height:30px;background:linear-gradient(#0C9BEA 0,#2BB8F5 2px,#1596E6 5px,#1290E0 85%,#0F7AD0 100%);border-left:1px solid #0B5BC0"></div>
<svg class="a" style="left:845px;top:740px" width="125" height="26" viewBox="845 740 125 26">
<rect x="850" y="751" width="14" height="8" fill="#f0f0e8" stroke="#303030"/><path d="M852 753.5h10M852 756h10" stroke="#505050" stroke-dasharray="1 1"/>
<path d="M872 750 h12 v9 h-6 l-2 2 v-2 h-4 Z" fill="#F8F0B8" stroke="#303030"/><text x="875" y="758" font-family="Liberation Sans" font-weight="bold" font-size="9" fill="#000">?</text>
<rect x="897" y="742" width="6" height="5" fill="none" stroke="#fff"/><rect x="900" y="745" width="6" height="5" fill="#2f6be0" stroke="#fff"/><path d="M897 757 h6 l-3 3 Z" fill="#fff"/>
<circle cx="922.5" cy="753.5" r="8.5" fill="#3FA0F0" stroke="#1a60c0"/><path d="M925 749 l-5 4.5 l5 4.5" fill="none" stroke="#fff" stroke-width="2"/>
<rect x="935" y="748" width="11" height="10" fill="#108010" stroke="#003000"/><path d="M937 750h7M937 752h7M937 754h7M937 756h7" stroke="#40C040" stroke-dasharray="1 1"/>
<circle cx="958" cy="751.5" r="6" fill="#c0c0c0" stroke="#606060"/><circle cx="958" cy="751.5" r="3" fill="#808080"/>
</svg>
<div class="a sans" style="left:976px;top:748px;font-size:11.7px;color:#fff">23:38</div>
<svg class="a" style="left:745px;top:726px" width="100" height="32" viewBox="0 0 1024 328">
<g opacity="0.92">
<ellipse cx="195" cy="195" rx="165" ry="105" fill="#fff"/><circle cx="240" cy="120" r="70" fill="#fff"/>
<ellipse cx="172" cy="198" rx="108" ry="70" fill="#2A5BD8"/><circle cx="160" cy="212" r="50" fill="#fff"/><circle cx="148" cy="222" r="15" fill="#2A5BD8"/>
<path d="M300 35 A95 95 0 0 1 392 130" fill="none" stroke="#fff" stroke-width="24"/><path d="M295 90 A42 42 0 0 1 338 132" fill="none" stroke="#fff" stroke-width="20"/>
</g>
<g fill="none" stroke="#fff" stroke-width="25" opacity="0.9">
<path d="M540 90 L540 225 Q535 260 485 278 M540 90 L700 90 L700 272 L670 272 M540 152 L700 152 M540 215 L700 215 M620 90 L620 280"/>
<path d="M850 40 L885 85 M770 110 L970 110 L970 188 L770 188 M770 110 L770 220 Q765 255 735 278"/>
</g></svg>
<div class="a sans" style="left:845px;top:724px;font-size:30px;line-height:36px;color:rgba(255,255,255,0.88)">6443994053</div>
</body></html>
